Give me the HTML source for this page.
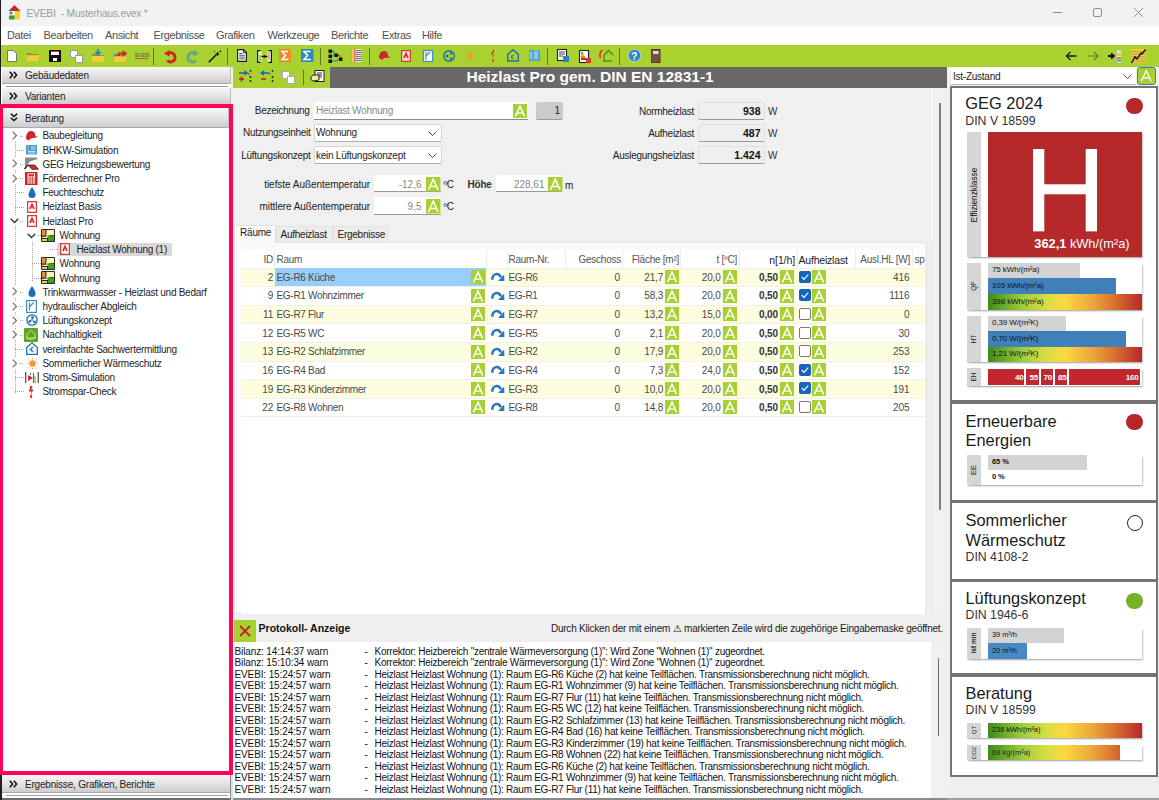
<!DOCTYPE html>
<html><head><meta charset="utf-8"><style>
html,body{margin:0;padding:0;}
body{width:1159px;height:800px;position:relative;overflow:hidden;background:#f0f0f0;font-family:"Liberation Sans",sans-serif;}
.t{position:absolute;white-space:nowrap;line-height:1;}
.b{position:absolute;box-sizing:border-box;}
.ab{position:absolute;background:#a4c93c;color:#fff;text-align:center;font-family:"Liberation Sans",sans-serif;}
svg{position:absolute;overflow:visible;}
</style></head><body>

<div class="b" style="left:0px;top:0px;width:1159px;height:26px;background:#f2f2f2"></div>
<div class="b" style="left:0px;top:26px;width:1159px;height:19px;background:#ffffff"></div>
<svg style="left:8px;top:5px" width="13" height="15" viewBox="0 0 13 15"><polygon points="6.5,0 0.5,6 12.5,6" fill="#c8282d"/><rect x="1" y="6" width="5.5" height="4" fill="#fff"/><circle cx="3" cy="8" r="1.6" fill="#2f82c8"/><rect x="6.5" y="6" width="5.5" height="8.5" fill="#f7d22a"/><rect x="1" y="10.5" width="5.5" height="4" fill="#3f9a2c"/></svg>
<div class="t" style="left:26.5px;top:8.87px;font-size:10.2px;color:#9a9a9a;font-weight:normal;letter-spacing:-0.2px;">EVEBI&nbsp; - Musterhaus.evex *</div>
<div class="b" style="left:1053px;top:12px;width:9px;height:1px;background:#8c8c8c"></div>
<div class="b" style="left:1093px;top:8px;width:9px;height:9px;border:1px solid #8c8c8c;border-radius:2px"></div>
<svg style="left:1134px;top:8px" width="9" height="9" viewBox="0 0 9 9"><path d="M0,0 L9,9 M9,0 L0,9" stroke="#8c8c8c" stroke-width="1"/></svg>
<div class="b" style="left:0px;top:0px;width:1px;height:104px;background:#202020"></div>
<div class="t" style="left:7px;top:29.69px;font-size:11px;color:#505050;font-weight:normal;letter-spacing:-0.4px;">Datei</div>
<div class="t" style="left:43.6px;top:29.69px;font-size:11px;color:#505050;font-weight:normal;letter-spacing:-0.4px;">Bearbeiten</div>
<div class="t" style="left:105px;top:29.69px;font-size:11px;color:#505050;font-weight:normal;letter-spacing:-0.4px;">Ansicht</div>
<div class="t" style="left:153.5px;top:29.69px;font-size:11px;color:#505050;font-weight:normal;letter-spacing:-0.4px;">Ergebnisse</div>
<div class="t" style="left:216px;top:29.69px;font-size:11px;color:#505050;font-weight:normal;letter-spacing:-0.4px;">Grafiken</div>
<div class="t" style="left:267.5px;top:29.69px;font-size:11px;color:#505050;font-weight:normal;letter-spacing:-0.4px;">Werkzeuge</div>
<div class="t" style="left:331px;top:29.69px;font-size:11px;color:#505050;font-weight:normal;letter-spacing:-0.4px;">Berichte</div>
<div class="t" style="left:382px;top:29.69px;font-size:11px;color:#505050;font-weight:normal;letter-spacing:-0.4px;">Extras</div>
<div class="t" style="left:422px;top:29.69px;font-size:11px;color:#505050;font-weight:normal;letter-spacing:-0.4px;">Hilfe</div>
<div class="b" style="left:1px;top:45px;width:1158px;height:22px;background:#a9d12f"></div>
<svg style="left:7px;top:50px" width="10" height="12" viewBox="0 0 10 12"><path d="M0.5,0.5 H6.5 L9.5,3.5 V11.5 H0.5 Z" fill="#fff" stroke="#777" stroke-width="1"/></svg>
<svg style="left:27px;top:51px" width="13" height="10" viewBox="0 0 13 10"><path d="M0,2 H4 L5,3 H11 V4 H0Z" fill="#8a8a6a"/><path d="M0.5,4.5 H12.5 L11,10 H0 Z" fill="#f6cd34"/></svg>
<svg style="left:48.5px;top:50px" width="12" height="12" viewBox="0 0 12 12"><rect x="0" y="0" width="12" height="12" fill="#111"/><rect x="2" y="1" width="8" height="4" fill="#fff"/><rect x="2" y="1" width="8" height="1" fill="#d33"/><rect x="4" y="8" width="4" height="3" fill="#fff"/></svg>
<svg style="left:70px;top:50px" width="13" height="13" viewBox="0 0 13 13"><rect x="0.5" y="0.5" width="7" height="7" fill="#fff" stroke="#999"/><rect x="5.5" y="5.5" width="7" height="7" fill="#fff" stroke="#999"/></svg>
<svg style="left:92px;top:49px" width="13" height="13" viewBox="0 0 13 13"><path d="M0,5 H4 L5,6 H12 V7 H0Z" fill="#8a8a6a"/><path d="M0.5,7 H12.5 L11,13 H0 Z" fill="#f6cd34"/><path d="M6,0 V5 M3.5,3 L6,5.5 L8.5,3" stroke="#2f7fc0" stroke-width="1.8" fill="none"/></svg>
<svg style="left:113.5px;top:49px" width="14" height="13" viewBox="0 0 14 13"><path d="M0,5 H4 L5,6 H11 V7.5 H0Z" fill="#7a7a9a"/><path d="M0.5,7.5 H12.5 L11,13 H0 Z" fill="#f6cd34"/><path d="M5,7 V4.5 H9" stroke="#d02828" stroke-width="2.2" fill="none"/><path d="M8.5,1 L13.5,4.5 L8.5,8 Z" fill="#d02828"/></svg>
<svg style="left:134.5px;top:50px" width="14" height="10" viewBox="0 0 14 10"><text x="0" y="7" font-size="5" fill="#555" font-family="Liberation Sans">EVEBI</text><rect x="0" y="8" width="13" height="1" fill="#d44"/></svg>
<div class="b" style="left:153px;top:48px;width:1px;height:17px;background:#5d7a1a"></div>
<svg style="left:163.5px;top:49.5px" width="13" height="13" viewBox="0 0 13 13"><path d="M4.5,3.2 A4.6,4.6 0 1 1 3.2,10.6" stroke="#d42020" stroke-width="2.9" fill="none"/><path d="M0,3.4 L5.6,0 L5.6,6.6 Z" fill="#d42020"/></svg>
<svg style="left:185.5px;top:49.5px" width="13" height="13" viewBox="0 0 13 13"><path d="M8.5,3.2 A4.6,4.6 0 1 0 9.8,10.6" stroke="#62a68c" stroke-width="2.9" fill="none"/><path d="M13,3.4 L7.4,0 L7.4,6.6 Z" fill="#62a68c"/></svg>
<svg style="left:207.5px;top:49.5px" width="14" height="13" viewBox="0 0 14 13"><path d="M0.8,12.2 L8.2,4.8" stroke="#111" stroke-width="1.5"/><path d="M9.5,1.5 L10.2,3.3 L12,4 L10.2,4.7 L9.5,6.5 L8.8,4.7 L7,4 L8.8,3.3Z" fill="#111"/><path d="M12.2,0 L12.6,1 L13.6,1.4 L12.6,1.8 L12.2,2.8 L11.8,1.8 L10.8,1.4 L11.8,1Z" fill="#111"/><circle cx="6.5" cy="1.5" r="0.6" fill="#111"/></svg>
<div class="b" style="left:227px;top:48px;width:1px;height:17px;background:#5d7a1a"></div>
<svg style="left:237px;top:49.2px" width="10" height="13" viewBox="0 0 10 13"><path d="M0.6,0.6 H6.5 L9.4,3.5 V12.4 H0.6 Z" fill="#fff" stroke="#1a1a1a" stroke-width="1.2"/><path d="M6.3,0.8 V3.7 H9.2" fill="none" stroke="#1a1a1a" stroke-width="0.9"/><path d="M2.2,4.5 H5.5 M2.2,6.3 H7.8 M2.2,8.1 H7.8 M2.2,9.9 H7.8" stroke="#555" stroke-width="1"/></svg>
<svg style="left:256.6px;top:49.5px" width="15" height="13" viewBox="0 0 15 13"><path d="M3.5,0.6 H0.6 V12.4 H3.5" fill="none" stroke="#111" stroke-width="1.2"/><path d="M11.5,0.6 H14.4 V12.4 H11.5" fill="none" stroke="#111" stroke-width="1.2"/><rect x="1.5" y="1.5" width="3" height="10" fill="#fff"/><rect x="10.5" y="1.5" width="3" height="10" fill="#fff"/><rect x="2" y="5" width="2" height="6" fill="#9ccf50"/><path d="M11,3 H13 M11,5 H13 M11,7 H13 M11,9 H13" stroke="#e04040" stroke-width="0.9"/><path d="M4.5,6.5 H10.5" stroke="#111" stroke-width="1.3"/><circle cx="7.5" cy="6.5" r="1.3" fill="#111"/></svg>
<svg style="left:279px;top:49px" width="12" height="13" viewBox="0 0 12 13"><rect x="0" y="0" width="12" height="13" fill="#ee8a2a"/><path d="M9,2.5 H3 L6.5,6.5 L3,10.5 H9.5" stroke="#fff" stroke-width="1.6" fill="none"/></svg>
<svg style="left:300.5px;top:49px" width="12.5" height="13" viewBox="0 0 12.5 13"><rect x="0" y="0" width="12.5" height="13" fill="#2f88c6"/><path d="M9.5,2.5 H3 L6.5,6.5 L3,10.5 H10" stroke="#fff" stroke-width="1.6" fill="none"/></svg>
<div class="b" style="left:319.5px;top:48px;width:1px;height:17px;background:#5d7a1a"></div>
<svg style="left:327.8px;top:49px" width="15" height="14" viewBox="0 0 15 14"><path d="M2.5,2 H6 V6.5 H8 M2.5,7 H6 M2.5,12 H9.5 V10 H12" stroke="#2a7fb8" stroke-width="1" fill="none"/><path d="M8,6.5 H12 V10" stroke="#d33" stroke-width="1" fill="none"/><rect x="0.5" y="0.5" width="3.5" height="3.5" fill="#111"/><rect x="0.5" y="5.5" width="3.5" height="3.5" fill="#111"/><rect x="0.5" y="10.5" width="3.5" height="3.5" fill="#111"/><rect x="6.5" y="4.5" width="3.5" height="3.5" fill="#111"/><rect x="11" y="8.5" width="3.5" height="3.5" fill="#111"/></svg>
<svg style="left:351.3px;top:49px" width="10.5" height="13" viewBox="0 0 10.5 13"><rect x="0" y="0" width="10.5" height="13" fill="#e8e8e8"/><rect x="0" y="0" width="1.6" height="13" fill="#f0a030"/><rect x="1.6" y="0" width="1.6" height="13" fill="#f3d040"/><rect x="3.2" y="0" width="1.3" height="13" fill="#e05050"/><path d="M5,1.5 H10.5 M5,3.5 H10.5 M5,5.5 H10.5 M5,7.5 H10.5 M5,9.5 H10.5 M5,11.5 H10.5" stroke="#666" stroke-width="0.9"/></svg>
<div class="b" style="left:369px;top:48px;width:1px;height:17px;background:#5d7a1a"></div>
<svg style="left:378px;top:49.5px" width="13" height="11" viewBox="0 0 13 11"><path d="M1,8 Q1,1 6,1 Q10,1 10,6 L13,7.5 L6,8 L4,10 Z" fill="#c8282d"/></svg>
<svg style="left:401px;top:49.5px" width="10" height="12" viewBox="0 0 10 12"><rect x="0.6" y="0.6" width="8.8" height="10.8" fill="#f4e0d0" stroke="#d83a2a" stroke-width="1.2"/><path d="M3,7.8 L5,3.6 L7,7.8" stroke="#d82a2a" stroke-width="1.7" fill="none"/></svg>
<svg style="left:423px;top:49.5px" width="10" height="12" viewBox="0 0 10 12"><rect x="0.5" y="0.5" width="9" height="11" fill="#fff" stroke="#3a8ccc" stroke-width="1.2"/><path d="M3,2 V10 M3,6 L7,2" stroke="#3a8ccc" stroke-width="1.2"/></svg>
<svg style="left:443px;top:49.5px" width="12" height="12" viewBox="0 0 12 12"><circle cx="6" cy="6" r="5.3" fill="none" stroke="#1a6fa8" stroke-width="1.4"/><circle cx="4" cy="6" r="1.5" fill="#1a6fa8"/><circle cx="8" cy="3.5" r="1.3" fill="#1a6fa8"/><circle cx="8" cy="8.5" r="1.3" fill="#1a6fa8"/></svg>
<svg style="left:465px;top:50.5px" width="10" height="10" viewBox="0 0 10 10"><circle cx="5" cy="5" r="3" fill="#f29a3a"/><path d="M5,0 V1.3 M5,8.7 V10 M0,5 H1.3 M8.7,5 H10 M1.5,1.5 L2.4,2.4 M7.6,7.6 L8.5,8.5 M1.5,8.5 L2.4,7.6 M7.6,2.4 L8.5,1.5" stroke="#f29a3a" stroke-width="0.9"/></svg>
<svg style="left:489.5px;top:49.5px" width="5" height="12" viewBox="0 0 5 12"><path d="M3,0 L1,5 H3.5 L2,9 L4.5,5 H2.5 L4.5,0Z" fill="#d02828"/><circle cx="3" cy="10.5" r="1" fill="#d02828"/></svg>
<svg style="left:507px;top:49px" width="12" height="13" viewBox="0 0 12 13"><path d="M0.7,5.5 L6,0.8 L11.3,5.5 V12 H0.7Z" fill="none" stroke="#1d73a8" stroke-width="1.4"/><text x="3.5" y="10" font-size="6" fill="#1d73a8" font-family="Liberation Sans" font-weight="bold">€</text></svg>
<svg style="left:529px;top:50px" width="11" height="11" viewBox="0 0 11 11"><rect x="0" y="0" width="11" height="11" fill="#4fa4d8"/><path d="M2,2 V9 M5,2 H9 M5,4 H9 M5,6 H9 M5,8 H9" stroke="#dcefff" stroke-width="0.9"/></svg>
<div class="b" style="left:547px;top:48px;width:1px;height:17px;background:#5d7a1a"></div>
<svg style="left:556.5px;top:49px" width="12" height="13" viewBox="0 0 12 13"><rect x="0.5" y="0.5" width="9" height="11" fill="#fff" stroke="#222" stroke-width="1.1"/><path d="M2,3 H8 M2,5 H8 M2,7 H6" stroke="#444"/><rect x="6" y="7" width="6" height="6" fill="#2f7fc0"/></svg>
<svg style="left:579px;top:49.5px" width="12" height="13" viewBox="0 0 12 13"><rect x="0.5" y="0.5" width="9" height="12" fill="#fff" stroke="#222" stroke-width="1.1"/><rect x="2" y="2" width="2" height="2" fill="#4a4"/><rect x="2" y="4" width="3" height="2" fill="#cc3"/><rect x="2" y="6" width="4" height="2" fill="#e80"/><rect x="2" y="8" width="5" height="2" fill="#d22"/><rect x="7" y="8" width="5" height="5" fill="#d33"/></svg>
<svg style="left:599px;top:49px" width="14" height="14" viewBox="0 0 14 14"><path d="M5,13 V6 L9.5,1.5 L14,6" stroke="#3f8a1f" stroke-width="1.3" fill="none"/><path d="M5,12 H13" stroke="#3f8a1f" stroke-width="1.3"/><path d="M3.5,10 Q1.5,5 5.5,2" stroke="#e0c030" stroke-width="1.5" fill="none"/><path d="M1.5,9 Q-0.5,4 3.5,1" stroke="#d02828" stroke-width="1.4" fill="none"/></svg>
<div class="b" style="left:618.5px;top:48px;width:1px;height:17px;background:#5d7a1a"></div>
<svg style="left:627.5px;top:49px" width="13" height="13" viewBox="0 0 13 13"><circle cx="6.5" cy="6.5" r="6.2" fill="#2f83c6" stroke="#e8f3ff" stroke-width="0.6"/><text x="3.3" y="10.5" font-size="10" font-weight="bold" fill="#fff" font-family="Liberation Sans">?</text></svg>
<svg style="left:650.5px;top:49px" width="10" height="14" viewBox="0 0 10 14"><rect x="0" y="0" width="9.5" height="14" fill="#5a3a2a"/><rect x="1" y="1" width="7.5" height="12" fill="#7a5040"/><rect x="2" y="2" width="5.5" height="3" fill="#bfe0f8"/></svg>
<svg style="left:1065px;top:49.5px" width="12" height="12" viewBox="0 0 12 12"><path d="M11.5,6 H1.5 M5.5,2 L1.5,6 L5.5,10" stroke="#1a1a1a" stroke-width="1.3" fill="none"/></svg>
<svg style="left:1088px;top:49.5px" width="12" height="12" viewBox="0 0 12 12"><path d="M0,6 H10 M6,2 L10,6 L6,10" stroke="#5f7a30" stroke-width="1.1" fill="none"/></svg>
<svg style="left:1108px;top:49.5px" width="14" height="13" viewBox="0 0 14 13"><path d="M0,6 H5 M3,3.5 L6,6 L3,8.5" stroke="#111" stroke-width="1.8" fill="none"/><rect x="8.5" y="0" width="5" height="13" fill="#e4e4e4" stroke="#aaa" stroke-width="0.5"/><rect x="9" y="3" width="4" height="3" fill="#f3d020"/><rect x="9" y="7" width="4" height="2" fill="#b86"/><rect x="9" y="9.5" width="4" height="2" fill="#5a5"/></svg>
<svg style="left:1130.5px;top:49px" width="15" height="14" viewBox="0 0 15 14"><rect x="0" y="0" width="15" height="14" fill="#f0c838"/><path d="M0,2.5 H15 M0,5 H15 M0,7.5 H15 M0,10 H15 M0,12.5 H15" stroke="#b09850" stroke-width="0.8"/><path d="M0.5,14 L4,8 L6,10 L10,4 L11,5 L14.5,0.5" stroke="#111" stroke-width="1.4" fill="none"/></svg>
<div class="b" style="left:1px;top:67px;width:230px;height:40px;background:#fff"></div>
<div class="b" style="left:2px;top:67px;width:229px;height:16.5px;background:linear-gradient(#f6f6f6,#e2e2e2 55%,#cdcdcd);border-bottom:1px solid #a9a9a9;border-right:1px solid #bdbdbd"></div>
<svg style="left:9px;top:71.2px" width="9" height="8" viewBox="0 0 9 8"><path d="M0.8,0.8 L3.6,4 L0.8,7.2 M4.8,0.8 L7.6,4 L4.8,7.2" stroke="#111" stroke-width="1.5" fill="none"/></svg>
<div class="t" style="left:25px;top:71.28px;font-size:10px;color:#222;font-weight:normal;letter-spacing:-0.2px;">Gebäudedaten</div>
<div class="b" style="left:6px;top:86px;width:222px;height:1px;background:#9a9a9a"></div>
<div class="b" style="left:2px;top:88px;width:229px;height:16.5px;background:linear-gradient(#f6f6f6,#e2e2e2 55%,#cdcdcd);border-bottom:1px solid #a9a9a9;border-right:1px solid #bdbdbd"></div>
<svg style="left:9px;top:92.2px" width="9" height="8" viewBox="0 0 9 8"><path d="M0.8,0.8 L3.6,4 L0.8,7.2 M4.8,0.8 L7.6,4 L4.8,7.2" stroke="#111" stroke-width="1.5" fill="none"/></svg>
<div class="t" style="left:25px;top:92.28px;font-size:10px;color:#222;font-weight:normal;letter-spacing:-0.2px;">Varianten</div>
<div class="b" style="left:0px;top:104.4px;width:233px;height:670.6px;background:#fff"></div>
<div class="b" style="left:0px;top:104.4px;width:233px;height:3.6px;background:#fe0459"></div>
<div class="b" style="left:0px;top:104.4px;width:3.4px;height:670.6px;background:#fe0459"></div>
<div class="b" style="left:229.4px;top:104.4px;width:3.6px;height:670.6px;background:#fe0459"></div>
<div class="b" style="left:0px;top:771.1px;width:233px;height:3.9px;background:#fe0459"></div>
<div class="b" style="left:3.4px;top:108px;width:226px;height:19.5px;background:linear-gradient(#f6f6f6,#e2e2e2 55%,#cdcdcd);border-bottom:1px solid #a9a9a9;border-right:1px solid #bdbdbd"></div>
<svg style="left:10px;top:113.2px" width="8" height="9" viewBox="0 0 8 9"><path d="M0.8,0.8 L4,3.6 L7.2,0.8 M0.8,4.8 L4,7.6 L7.2,4.8" stroke="#111" stroke-width="1.5" fill="none"/></svg>
<div class="t" style="left:25px;top:113.78px;font-size:10px;color:#222;font-weight:normal;letter-spacing:-0.2px;">Beratung</div>
<div class="b" style="left:0px;top:104px;width:1px;height:1px;"></div>
<div class="b" style="left:0px;top:775px;width:2px;height:25px;background:#202020"></div>
<div class="b" style="left:2px;top:775px;width:229px;height:25px;background:#fff"></div>
<div class="b" style="left:2px;top:775px;width:229px;height:17.5px;background:linear-gradient(#f6f6f6,#e2e2e2 55%,#cdcdcd);border-bottom:1px solid #a9a9a9;border-right:1px solid #bdbdbd"></div>
<svg style="left:9px;top:779.8px" width="9" height="8" viewBox="0 0 9 8"><path d="M0.8,0.8 L3.6,4 L0.8,7.2 M4.8,0.8 L7.6,4 L4.8,7.2" stroke="#111" stroke-width="1.5" fill="none"/></svg>
<div class="t" style="left:25px;top:779.78px;font-size:10px;color:#222;font-weight:normal;letter-spacing:-0.2px;">Ergebnisse, Grafiken, Berichte</div>
<div class="b" style="left:6px;top:795px;width:222px;height:1px;background:#a0a0a0"></div>
<div class="b" style="left:2px;top:798px;width:229px;height:2px;background:#6d6d6d"></div>
<div class="b" style="left:229.8px;top:775px;width:1px;height:25px;background:#8a8a8a"></div>
<div class="b" style="left:230.8px;top:775px;width:2.2px;height:25px;background:#e0e0e0"></div>
<div class="b" style="left:20.0px;top:136px;width:4.0px;height:1px;background:repeating-linear-gradient(90deg,#aaa 0 1px,transparent 1px 2px)"></div>
<div class="b" style="left:15px;top:150px;width:9px;height:1px;background:repeating-linear-gradient(90deg,#aaa 0 1px,transparent 1px 2px)"></div>
<div class="b" style="left:20.0px;top:164px;width:4.0px;height:1px;background:repeating-linear-gradient(90deg,#aaa 0 1px,transparent 1px 2px)"></div>
<div class="b" style="left:20.0px;top:178px;width:4.0px;height:1px;background:repeating-linear-gradient(90deg,#aaa 0 1px,transparent 1px 2px)"></div>
<div class="b" style="left:15px;top:192px;width:9px;height:1px;background:repeating-linear-gradient(90deg,#aaa 0 1px,transparent 1px 2px)"></div>
<div class="b" style="left:15px;top:207px;width:9px;height:1px;background:repeating-linear-gradient(90deg,#aaa 0 1px,transparent 1px 2px)"></div>
<div class="b" style="left:20.0px;top:221px;width:4.0px;height:1px;background:repeating-linear-gradient(90deg,#aaa 0 1px,transparent 1px 2px)"></div>
<div class="b" style="left:37.5px;top:235px;width:4.0px;height:1px;background:repeating-linear-gradient(90deg,#aaa 0 1px,transparent 1px 2px)"></div>
<div class="b" style="left:50px;top:249px;width:9px;height:1px;background:repeating-linear-gradient(90deg,#aaa 0 1px,transparent 1px 2px)"></div>
<div class="b" style="left:32px;top:263px;width:9px;height:1px;background:repeating-linear-gradient(90deg,#aaa 0 1px,transparent 1px 2px)"></div>
<div class="b" style="left:32px;top:278px;width:9px;height:1px;background:repeating-linear-gradient(90deg,#aaa 0 1px,transparent 1px 2px)"></div>
<div class="b" style="left:20.0px;top:292px;width:4.0px;height:1px;background:repeating-linear-gradient(90deg,#aaa 0 1px,transparent 1px 2px)"></div>
<div class="b" style="left:20.0px;top:306px;width:4.0px;height:1px;background:repeating-linear-gradient(90deg,#aaa 0 1px,transparent 1px 2px)"></div>
<div class="b" style="left:20.0px;top:320px;width:4.0px;height:1px;background:repeating-linear-gradient(90deg,#aaa 0 1px,transparent 1px 2px)"></div>
<div class="b" style="left:20.0px;top:335px;width:4.0px;height:1px;background:repeating-linear-gradient(90deg,#aaa 0 1px,transparent 1px 2px)"></div>
<div class="b" style="left:15px;top:349px;width:9px;height:1px;background:repeating-linear-gradient(90deg,#aaa 0 1px,transparent 1px 2px)"></div>
<div class="b" style="left:20.0px;top:363px;width:4.0px;height:1px;background:repeating-linear-gradient(90deg,#aaa 0 1px,transparent 1px 2px)"></div>
<div class="b" style="left:15px;top:377px;width:9px;height:1px;background:repeating-linear-gradient(90deg,#aaa 0 1px,transparent 1px 2px)"></div>
<div class="b" style="left:15px;top:391px;width:9px;height:1px;background:repeating-linear-gradient(90deg,#aaa 0 1px,transparent 1px 2px)"></div>
<div class="b" style="left:15px;top:142px;width:1px;height:252px;background:repeating-linear-gradient(#aaa 0 1px,transparent 1px 2px)"></div>
<div class="b" style="left:32px;top:242px;width:1px;height:40px;background:repeating-linear-gradient(#aaa 0 1px,transparent 1px 2px)"></div>
<div class="b" style="left:50px;top:249px;width:8px;height:1px;background:repeating-linear-gradient(90deg,#aaa 0 1px,transparent 1px 2px)"></div>
<svg style="left:11.5px;top:131.0px" width="6" height="9" viewBox="0 0 6 9"><rect x="-1" y="-1" width="8" height="11" fill="#fff"/><path d="M0.7,0.7 L4.5,4.5 L0.7,8.3" stroke="#6a6a6a" stroke-width="1.1" fill="none"/></svg>
<svg style="left:25.0px;top:130.0px" width="13" height="11" viewBox="0 0 13 11"><path d="M1,9 Q1,1 6,1 Q10,1 10.5,6 L13,7 L6,8.5 L3.5,10.5 Z" fill="#c8282d"/></svg>
<div class="t" style="left:42.4px;top:131.34px;font-size:10px;color:#1e1e1e;font-weight:normal;letter-spacing:-0.27px;">Baubegleitung</div>
<svg style="left:26.0px;top:145.0px" width="11" height="9.5" viewBox="0 0 11 9.5"><rect x="0" y="0" width="11" height="9.5" rx="0.5" fill="#4a9fd0"/><path d="M2.2,1.5 V5 H3.5 M5,2 H9.5 M5,4 H9.5 M2,6.5 H9.5 M2,8 H9.5" stroke="#e6f3fb" stroke-width="0.8"/></svg>
<div class="t" style="left:42.4px;top:145.56px;font-size:10px;color:#1e1e1e;font-weight:normal;letter-spacing:-0.27px;">BHKW-Simulation</div>
<svg style="left:11.5px;top:159.4px" width="6" height="9" viewBox="0 0 6 9"><rect x="-1" y="-1" width="8" height="11" fill="#fff"/><path d="M0.7,0.7 L4.5,4.5 L0.7,8.3" stroke="#6a6a6a" stroke-width="1.1" fill="none"/></svg>
<svg style="left:24.0px;top:157.2px" width="15" height="13.5" viewBox="0 0 15 13.5"><path d="M1,0.5 H13 L13.6,2 L6,4.6 L3.5,7 L1,9.5 Z" fill="#8c8c8c"/><path d="M4.2,8 H10.8 L14.5,12.3 H7.8 Z" fill="#d22a2a" stroke="#3a0a0a" stroke-width="0.7"/><path d="M0.6,12 L4,7.6" stroke="#111" stroke-width="1.4"/></svg>
<div class="t" style="left:42.4px;top:159.78px;font-size:10px;color:#1e1e1e;font-weight:normal;letter-spacing:-0.27px;">GEG Heizungsbewertung</div>
<svg style="left:11.5px;top:173.7px" width="6" height="9" viewBox="0 0 6 9"><rect x="-1" y="-1" width="8" height="11" fill="#fff"/><path d="M0.7,0.7 L4.5,4.5 L0.7,8.3" stroke="#6a6a6a" stroke-width="1.1" fill="none"/></svg>
<svg style="left:25.0px;top:171.7px" width="12.5" height="13" viewBox="0 0 12.5 13"><rect x="0" y="0" width="12.5" height="13" rx="0.5" fill="#c62828"/><rect x="2.5" y="1.5" width="7.5" height="10" fill="#fff"/><rect x="3.5" y="2.3" width="5.5" height="2" fill="#c62828"/><path d="M2.5,6 H10 M2.5,8 H10 M2.5,10 H10 M5,4.5 V11.5 M7.5,4.5 V11.5" stroke="#c62828" stroke-width="0.7"/></svg>
<div class="t" style="left:42.4px;top:174.00px;font-size:10px;color:#1e1e1e;font-weight:normal;letter-spacing:-0.27px;">Förderrechner Pro</div>
<svg style="left:27.5px;top:186.9px" width="8" height="11" viewBox="0 0 8 11"><path d="M4,0 Q8,6 7.5,8.5 Q7,11 4,11 Q1,11 0.5,8.5 Q0,6 4,0Z" fill="#1a6fb8"/></svg>
<div class="t" style="left:42.4px;top:188.22px;font-size:10px;color:#1e1e1e;font-weight:normal;letter-spacing:-0.27px;">Feuchteschutz</div>
<svg style="left:27.0px;top:200.6px" width="10" height="12" viewBox="0 0 10 12"><rect x="0.6" y="0.6" width="8.8" height="10.8" fill="#f4f4f4" stroke="#d83a3a" stroke-width="1.2"/><path d="M3,7.8 L5,3.6 L7,7.8" stroke="#d82a2a" stroke-width="1.7" fill="none"/></svg>
<div class="t" style="left:42.4px;top:202.44px;font-size:10px;color:#1e1e1e;font-weight:normal;letter-spacing:-0.27px;">Heizlast Basis</div>
<svg style="left:9.5px;top:218.3px" width="9" height="6" viewBox="0 0 9 6"><rect x="-1" y="-2" width="11" height="9" fill="#fff"/><path d="M0.7,0.7 L4.5,4.5 L8.3,0.7" stroke="#333" stroke-width="1.3" fill="none"/></svg>
<svg style="left:27.0px;top:214.8px" width="10" height="12" viewBox="0 0 10 12"><rect x="0.6" y="0.6" width="8.8" height="10.8" fill="#f4f4f4" stroke="#d83a3a" stroke-width="1.2"/><path d="M3,7.8 L5,3.6 L7,7.8" stroke="#d82a2a" stroke-width="1.7" fill="none"/></svg>
<div class="t" style="left:42.4px;top:216.66px;font-size:10px;color:#1e1e1e;font-weight:normal;letter-spacing:-0.27px;">Heizlast Pro</div>
<svg style="left:26.5px;top:232.5px" width="9" height="6" viewBox="0 0 9 6"><rect x="-1" y="-2" width="11" height="9" fill="#fff"/><path d="M0.7,0.7 L4.5,4.5 L8.3,0.7" stroke="#333" stroke-width="1.3" fill="none"/></svg>
<svg style="left:41.3px;top:228.5px" width="14" height="13" viewBox="0 0 14 13"><rect x="0" y="0" width="14" height="13" rx="1" fill="#2a2a2a"/><rect x="1" y="1" width="3.5" height="5.5" fill="#f08a2a"/><rect x="5.5" y="1" width="7.5" height="5" fill="#f8f4b0"/><rect x="7" y="6.5" width="6" height="5.5" fill="#4a9a1a"/><rect x="1" y="10" width="5" height="2" fill="#f0d040"/><path d="M1.2,8.4 H6 V5.8 H8.5" stroke="#f0f0f0" stroke-width="1.3" fill="none"/></svg>
<div class="t" style="left:59.4px;top:230.88px;font-size:10px;color:#1e1e1e;font-weight:normal;letter-spacing:-0.27px;">Wohnung</div>
<div class="b" style="left:57px;top:242.5px;width:115px;height:13.2px;background:#d9d9d9"></div>
<svg style="left:59.6px;top:243.3px" width="10" height="12" viewBox="0 0 10 12"><rect x="0.6" y="0.6" width="8.8" height="10.8" fill="#f4f4f4" stroke="#d83a3a" stroke-width="1.2"/><path d="M3,7.8 L5,3.6 L7,7.8" stroke="#d82a2a" stroke-width="1.7" fill="none"/></svg>
<div class="t" style="left:76.4px;top:245.09px;font-size:10px;color:#1e1e1e;font-weight:normal;letter-spacing:-0.27px;">Heizlast Wohnung (1)</div>
<svg style="left:41.3px;top:257.0px" width="14" height="13" viewBox="0 0 14 13"><rect x="0" y="0" width="14" height="13" rx="1" fill="#2a2a2a"/><rect x="1" y="1" width="3.5" height="5.5" fill="#f08a2a"/><rect x="5.5" y="1" width="7.5" height="5" fill="#f8f4b0"/><rect x="7" y="6.5" width="6" height="5.5" fill="#4a9a1a"/><rect x="1" y="10" width="5" height="2" fill="#f0d040"/><path d="M1.2,8.4 H6 V5.8 H8.5" stroke="#f0f0f0" stroke-width="1.3" fill="none"/></svg>
<div class="t" style="left:59.4px;top:259.32px;font-size:10px;color:#1e1e1e;font-weight:normal;letter-spacing:-0.27px;">Wohnung</div>
<svg style="left:41.3px;top:271.2px" width="14" height="13" viewBox="0 0 14 13"><rect x="0" y="0" width="14" height="13" rx="1" fill="#2a2a2a"/><rect x="1" y="1" width="3.5" height="5.5" fill="#f08a2a"/><rect x="5.5" y="1" width="7.5" height="5" fill="#f8f4b0"/><rect x="7" y="6.5" width="6" height="5.5" fill="#4a9a1a"/><rect x="1" y="10" width="5" height="2" fill="#f0d040"/><path d="M1.2,8.4 H6 V5.8 H8.5" stroke="#f0f0f0" stroke-width="1.3" fill="none"/></svg>
<div class="t" style="left:59.4px;top:273.54px;font-size:10px;color:#1e1e1e;font-weight:normal;letter-spacing:-0.27px;">Wohnung</div>
<svg style="left:11.5px;top:287.4px" width="6" height="9" viewBox="0 0 6 9"><rect x="-1" y="-1" width="8" height="11" fill="#fff"/><path d="M0.7,0.7 L4.5,4.5 L0.7,8.3" stroke="#6a6a6a" stroke-width="1.1" fill="none"/></svg>
<svg style="left:27.5px;top:286.4px" width="8" height="11" viewBox="0 0 8 11"><path d="M4,0 Q8,6 7.5,8.5 Q7,11 4,11 Q1,11 0.5,8.5 Q0,6 4,0Z" fill="#1a6fb8"/></svg>
<div class="t" style="left:42.4px;top:287.76px;font-size:10px;color:#1e1e1e;font-weight:normal;letter-spacing:-0.27px;">Trinkwarmwasser - Heizlast und Bedarf</div>
<svg style="left:11.5px;top:301.6px" width="6" height="9" viewBox="0 0 6 9"><rect x="-1" y="-1" width="8" height="11" fill="#fff"/><path d="M0.7,0.7 L4.5,4.5 L0.7,8.3" stroke="#6a6a6a" stroke-width="1.1" fill="none"/></svg>
<svg style="left:26.0px;top:299.6px" width="11" height="13" viewBox="0 0 11 13"><rect x="0.6" y="0.6" width="9.8" height="11.8" fill="#fff" stroke="#3a8ccc" stroke-width="1.2"/><path d="M3.5,2.5 V10.5 M3.5,7 L7.5,2.5" stroke="#3a8ccc" stroke-width="1.2"/></svg>
<div class="t" style="left:42.4px;top:301.98px;font-size:10px;color:#1e1e1e;font-weight:normal;letter-spacing:-0.27px;">hydraulischer Abgleich</div>
<svg style="left:11.5px;top:315.9px" width="6" height="9" viewBox="0 0 6 9"><rect x="-1" y="-1" width="8" height="11" fill="#fff"/><path d="M0.7,0.7 L4.5,4.5 L0.7,8.3" stroke="#6a6a6a" stroke-width="1.1" fill="none"/></svg>
<svg style="left:26.0px;top:314.4px" width="12" height="12" viewBox="0 0 12 12"><circle cx="6" cy="6" r="5.2" fill="none" stroke="#1a6fa8" stroke-width="1.3"/><circle cx="6.5" cy="3.6" r="1.4" fill="#1a6fa8"/><circle cx="3.8" cy="7.4" r="1.4" fill="#1a6fa8"/><circle cx="8.4" cy="7.8" r="1.4" fill="#1a6fa8"/><circle cx="6" cy="6" r="0.9" fill="#1a6fa8"/></svg>
<div class="t" style="left:42.4px;top:316.20px;font-size:10px;color:#1e1e1e;font-weight:normal;letter-spacing:-0.27px;">Lüftungskonzept</div>
<svg style="left:11.5px;top:330.1px" width="6" height="9" viewBox="0 0 6 9"><rect x="-1" y="-1" width="8" height="11" fill="#fff"/><path d="M0.7,0.7 L4.5,4.5 L0.7,8.3" stroke="#6a6a6a" stroke-width="1.1" fill="none"/></svg>
<svg style="left:24.0px;top:327.6px" width="14" height="14" viewBox="0 0 14 14"><rect x="0" y="0" width="14" height="14" rx="1" fill="#5ea51e"/><path d="M3,6 L7,2.5 L11,6 V10 H3Z" fill="none" stroke="#dff0c0" stroke-width="0.8"/><path d="M2,10 Q7,13 12,9" stroke="#dff0c0" stroke-width="0.8" fill="none"/></svg>
<div class="t" style="left:42.4px;top:330.42px;font-size:10px;color:#1e1e1e;font-weight:normal;letter-spacing:-0.27px;">Nachhaltigkeit</div>
<svg style="left:26.0px;top:342.3px" width="12" height="13" viewBox="0 0 12 13"><path d="M0.7,5.5 L6,0.8 L11.3,5.5 V12.3 H0.7Z" fill="none" stroke="#1d73a8" stroke-width="1.3"/><path d="M7.8,5.2 Q5.2,4.6 5,7.5 Q5.2,10.4 7.8,9.8 M3.6,7 H6.6 M3.6,8.2 H6.6" stroke="#1d73a8" stroke-width="0.9" fill="none"/></svg>
<div class="t" style="left:42.4px;top:344.64px;font-size:10px;color:#1e1e1e;font-weight:normal;letter-spacing:-0.27px;">vereinfachte Sachwertermittlung</div>
<svg style="left:11.5px;top:358.5px" width="6" height="9" viewBox="0 0 6 9"><rect x="-1" y="-1" width="8" height="11" fill="#fff"/><path d="M0.7,0.7 L4.5,4.5 L0.7,8.3" stroke="#6a6a6a" stroke-width="1.1" fill="none"/></svg>
<svg style="left:26.5px;top:357.5px" width="11" height="11" viewBox="0 0 11 11"><circle cx="5.5" cy="5.5" r="3.2" fill="#f29a3a"/><path d="M5.5,0 V1.3 M5.5,9.7 V11 M0,5.5 H1.3 M9.7,5.5 H11 M1.6,1.6 L2.5,2.5 M8.5,8.5 L9.4,9.4 M1.6,9.4 L2.5,8.5 M8.5,2.5 L9.4,1.6" stroke="#f29a3a" stroke-width="0.9"/></svg>
<div class="t" style="left:42.4px;top:358.86px;font-size:10px;color:#1e1e1e;font-weight:normal;letter-spacing:-0.27px;">Sommerlicher Wärmeschutz</div>
<svg style="left:24.5px;top:371.7px" width="14" height="11" viewBox="0 0 14 11"><path d="M0.7,0 V11 M13.3,0 V11" stroke="#555" stroke-width="1.3"/><path d="M3,3 L8,6 L3,9Z" fill="#d02828"/><path d="M5.5,1 V3 M8.5,1 V11" stroke="#333" stroke-width="0.8"/><rect x="9.3" y="4" width="1.5" height="7" fill="#9c4"/></svg>
<div class="t" style="left:42.4px;top:373.08px;font-size:10px;color:#1e1e1e;font-weight:normal;letter-spacing:-0.27px;">Strom-Simulation</div>
<svg style="left:28.0px;top:385.5px" width="6" height="12" viewBox="0 0 6 12"><path d="M2.2,0 L4.6,0 L3.2,3.5 L5.6,3.5 L2.6,8.6 L3.2,5.6 L1,5.6 Z" fill="#d02828"/><path d="M3,8 V10" stroke="#d02828" stroke-width="1"/><circle cx="3" cy="10.8" r="1.2" fill="#d02828"/></svg>
<div class="t" style="left:42.4px;top:387.30px;font-size:10px;color:#1e1e1e;font-weight:normal;letter-spacing:-0.27px;">Stromspar-Check</div>
<div class="b" style="left:233px;top:67px;width:714px;height:20.5px;background:#a9d12f"></div>
<div class="b" style="left:330px;top:67px;width:617px;height:20.5px;background:#686868"></div>
<div class="t" style="left:466.5px;top:69.38px;font-size:15.5px;color:#fff;font-weight:bold;letter-spacing:0px;">Heizlast Pro gem. DIN EN 12831-1</div>
<svg style="left:239px;top:70px" width="13" height="12" viewBox="0 0 13 12"><path d="M0,3 H8 M5.5,1 L8,3 L5.5,5" stroke="#1f5fae" stroke-width="1.6" fill="none"/><path d="M0,9 H5 M2.5,6.5 V11.5" stroke="#d02828" stroke-width="1.8"/><rect x="9" y="3" width="1.5" height="1.5" fill="#d02828"/><circle cx="11.5" cy="0.8" r="0.9" fill="#111"/><circle cx="11.5" cy="7" r="0.9" fill="#111"/><circle cx="11.5" cy="11" r="0.9" fill="#111"/></svg>
<svg style="left:261px;top:70px" width="13" height="12" viewBox="0 0 13 12"><path d="M8,3 H0.5 M3,1 L0.5,3 L3,5" stroke="#1f5fae" stroke-width="1.6" fill="none"/><path d="M0,9 H5" stroke="#d02828" stroke-width="1.8"/><rect x="8" y="3" width="1.5" height="1.5" fill="#d02828"/><circle cx="11.5" cy="0.8" r="0.9" fill="#111"/><circle cx="11.5" cy="7" r="0.9" fill="#111"/><circle cx="11.5" cy="11" r="0.9" fill="#111"/></svg>
<svg style="left:282px;top:71px" width="13" height="13" viewBox="0 0 13 13"><rect x="0.5" y="0.5" width="7" height="7" fill="#fff" stroke="#aaa"/><rect x="5.5" y="5.5" width="7" height="7" fill="#fff" stroke="#aaa"/></svg>
<div class="b" style="left:302.5px;top:70px;width:1px;height:15px;background:#5d7a1a"></div>
<svg style="left:311px;top:70px" width="14" height="12" viewBox="0 0 14 12"><rect x="4" y="0.5" width="9" height="11" fill="#fff" stroke="#222"/><path d="M6,3 H11 M6,5 H11 M6,7 H11" stroke="#333"/><path d="M0,7 Q2,4 5,5 L8,5 V10 L3,11 Q0,11 0,9Z" fill="#f3e6a0" stroke="#111" stroke-width="0.9"/></svg>
<div class="t" style="right:849.5px;top:105.94px;font-size:10px;color:#222;font-weight:normal;letter-spacing:-0.28px;">Bezeichnung</div>
<div class="b" style="left:313.5px;top:102px;width:214.5px;height:17.5px;background:#fff;border-bottom:1px solid #8a8a8a;border-radius:2px 2px 0 0"></div>
<div class="t" style="left:316px;top:105.94px;font-size:10px;color:#8a8a8a;font-weight:normal;letter-spacing:-0.25px;">Heizlast Wohnung</div>
<svg style="left:513px;top:103.5px" width="14" height="14" viewBox="0 0 14 14"><rect width="14" height="14" fill="#a8d030"/><path d="M2.4,12.4 L7,2.1 L11.6,12.4 M4,9.1 H10" stroke="#fff" stroke-width="1.45" fill="none"/></svg>
<div class="b" style="left:535.5px;top:102px;width:27.5px;height:17.5px;background:#cbcbcb;border-bottom:1px solid #9a9a9a;border-radius:2px"></div>
<div class="t" style="right:599px;top:105.94px;font-size:10px;color:#222;font-weight:normal;letter-spacing:0px;">1</div>
<div class="t" style="right:848.5px;top:128.44px;font-size:10px;color:#222;font-weight:normal;letter-spacing:-0.28px;">Nutzungseinheit</div>
<div class="b" style="left:313.5px;top:124px;width:128px;height:17.5px;background:#fff;border:1px solid #d6d6d6;border-bottom-color:#b0b0b0;border-radius:2px"></div>
<div class="t" style="left:316px;top:128.44px;font-size:10px;color:#1e1e1e;font-weight:normal;letter-spacing:-0.25px;">Wohnung</div>
<svg style="left:428px;top:130.5px" width="9" height="5" viewBox="0 0 9 5"><path d="M0.5,0.5 L4.5,4.5 L8.5,0.5" stroke="#444" stroke-width="1" fill="none"/></svg>
<div class="t" style="right:848.5px;top:150.74px;font-size:10px;color:#222;font-weight:normal;letter-spacing:-0.28px;">Lüftungskonzept</div>
<div class="b" style="left:313.5px;top:146.3px;width:128px;height:17.5px;background:#fff;border:1px solid #d6d6d6;border-bottom-color:#b0b0b0;border-radius:2px"></div>
<div class="t" style="left:316px;top:150.74px;font-size:10px;color:#1e1e1e;font-weight:normal;letter-spacing:-0.25px;">kein Lüftungskonzept</div>
<svg style="left:428px;top:152.8px" width="9" height="5" viewBox="0 0 9 5"><path d="M0.5,0.5 L4.5,4.5 L8.5,0.5" stroke="#444" stroke-width="1" fill="none"/></svg>
<div class="t" style="right:465px;top:106.64px;font-size:10px;color:#222;font-weight:normal;letter-spacing:-0.28px;">Normheizlast</div>
<div class="b" style="left:698px;top:102px;width:67px;height:17.5px;background:#efefef;border:1px solid #dedede;border-bottom:1.5px solid #9a9a9a;border-radius:2px"></div>
<div class="t" style="right:398.5px;top:105.71px;font-size:10.5px;color:#111;font-weight:bold;letter-spacing:0px;">938</div>
<div class="t" style="left:768px;top:106.94px;font-size:10px;color:#333;font-weight:normal;letter-spacing:0px;">W</div>
<div class="t" style="right:465px;top:128.94px;font-size:10px;color:#222;font-weight:normal;letter-spacing:-0.28px;">Aufheizlast</div>
<div class="b" style="left:698px;top:124.3px;width:67px;height:17.5px;background:#efefef;border:1px solid #dedede;border-bottom:1.5px solid #9a9a9a;border-radius:2px"></div>
<div class="t" style="right:398.5px;top:128.01px;font-size:10.5px;color:#111;font-weight:bold;letter-spacing:0px;">487</div>
<div class="t" style="left:768px;top:129.24px;font-size:10px;color:#333;font-weight:normal;letter-spacing:0px;">W</div>
<div class="t" style="right:465px;top:150.94px;font-size:10px;color:#222;font-weight:normal;letter-spacing:-0.28px;">Auslegungsheizlast</div>
<div class="b" style="left:698px;top:146.3px;width:67px;height:17.5px;background:#efefef;border:1px solid #dedede;border-bottom:1.5px solid #9a9a9a;border-radius:2px"></div>
<div class="t" style="right:398.5px;top:150.01px;font-size:10.5px;color:#111;font-weight:bold;letter-spacing:0px;">1.424</div>
<div class="t" style="left:768px;top:151.24px;font-size:10px;color:#333;font-weight:normal;letter-spacing:0px;">W</div>
<div class="t" style="right:789px;top:179.94px;font-size:10px;color:#222;font-weight:normal;letter-spacing:-0.04px;">tiefste Außentemperatur</div>
<div class="b" style="left:374px;top:175.2px;width:66.5px;height:17.3px;background:#fff;border-bottom:1px solid #9a9a9a;border-radius:2px 2px 0 0"></div>
<div class="t" style="right:737.5px;top:179.94px;font-size:10px;color:#888;font-weight:normal;letter-spacing:0px;">-12,6</div>
<svg style="left:425.5px;top:176.5px" width="14.5" height="14.5" viewBox="0 0 14 14"><rect width="14" height="14" fill="#a8d030"/><path d="M2.4,12.4 L7,2.1 L11.6,12.4 M4,9.1 H10" stroke="#fff" stroke-width="1.45" fill="none"/></svg>
<div class="t" style="left:443.5px;top:180.44px;font-size:10px;color:#222;font-weight:normal;letter-spacing:-0.3px;">ºC</div>
<div class="t" style="left:467.5px;top:179.94px;font-size:10px;color:#333;font-weight:bold;letter-spacing:-0.2px;">Höhe</div>
<div class="b" style="left:496px;top:175.2px;width:66px;height:17.3px;background:#fff;border-bottom:1px solid #9a9a9a;border-radius:2px 2px 0 0"></div>
<div class="t" style="right:614.5px;top:179.94px;font-size:10px;color:#888;font-weight:normal;letter-spacing:0px;">228,61</div>
<svg style="left:548px;top:176.5px" width="14.5" height="14.5" viewBox="0 0 14 14"><rect width="14" height="14" fill="#a8d030"/><path d="M2.4,12.4 L7,2.1 L11.6,12.4 M4,9.1 H10" stroke="#fff" stroke-width="1.45" fill="none"/></svg>
<div class="t" style="left:565px;top:180.94px;font-size:10px;color:#222;font-weight:normal;letter-spacing:0px;">m</div>
<div class="t" style="right:789px;top:201.94px;font-size:10px;color:#222;font-weight:normal;letter-spacing:-0.1px;">mittlere Außentemperatur</div>
<div class="b" style="left:374px;top:197.3px;width:66.5px;height:17.3px;background:#fff;border-bottom:1px solid #9a9a9a;border-radius:2px 2px 0 0"></div>
<div class="t" style="right:737.5px;top:201.94px;font-size:10px;color:#888;font-weight:normal;letter-spacing:0px;">9,5</div>
<svg style="left:425.5px;top:198.5px" width="14.5" height="14.5" viewBox="0 0 14 14"><rect width="14" height="14" fill="#a8d030"/><path d="M2.4,12.4 L7,2.1 L11.6,12.4 M4,9.1 H10" stroke="#fff" stroke-width="1.45" fill="none"/></svg>
<div class="t" style="left:443.5px;top:202.44px;font-size:10px;color:#222;font-weight:normal;letter-spacing:-0.3px;">ºC</div>
<div class="b" style="left:234px;top:241.5px;width:697px;height:372.5px;background:#fafafa;border:1px solid #e6e6e6"></div>
<div class="b" style="left:276px;top:226px;width:56.5px;height:16px;background:#ececec;border:1px solid #e2e2e2;border-bottom:none"></div>
<div class="b" style="left:333px;top:226px;width:54.5px;height:16px;background:#ececec;border:1px solid #e2e2e2;border-bottom:none"></div>
<div class="b" style="left:234px;top:224.5px;width:42px;height:18px;background:#fafafa;border:1px solid #e2e2e2;border-bottom:none"></div>
<div class="t" style="left:240px;top:228.03px;font-size:10px;color:#222;font-weight:normal;letter-spacing:-0.2px;">Räume</div>
<div class="t" style="left:280.5px;top:230.03px;font-size:10px;color:#222;font-weight:normal;letter-spacing:-0.25px;">Aufheizlast</div>
<div class="t" style="left:337.5px;top:230.03px;font-size:10px;color:#222;font-weight:normal;letter-spacing:-0.25px;">Ergebnisse</div>
<div class="b" style="left:241px;top:249.5px;width:684px;height:364.5px;background:#fff"></div>
<div class="t" style="right:886px;top:255.03px;font-size:10px;color:#555;font-weight:normal;letter-spacing:-0.25px;">ID</div>
<div class="t" style="left:276.5px;top:255.03px;font-size:10px;color:#555;font-weight:normal;letter-spacing:-0.25px;">Raum</div>
<div class="t" style="left:508.5px;top:255.03px;font-size:10px;color:#555;font-weight:normal;letter-spacing:-0.25px;">Raum-Nr.</div>
<div class="t" style="right:538px;top:255.03px;font-size:10px;color:#555;font-weight:normal;letter-spacing:-0.25px;">Geschoss</div>
<div class="t" style="right:480px;top:255.03px;font-size:10px;color:#555;font-weight:normal;letter-spacing:-0.25px;">Fläche [m²]</div>
<div class="t" style="right:422px;top:255.03px;font-size:10px;color:#555;font-weight:normal;letter-spacing:-0.25px;">t [ºC]</div>
<div class="t" style="right:364px;top:254.61px;font-size:10.5px;color:#222;font-weight:normal;letter-spacing:-0.1px;">n[1/h]</div>
<div class="t" style="left:798.5px;top:254.61px;font-size:10.5px;color:#222;font-weight:normal;letter-spacing:-0.2px;">Aufheizlast</div>
<div class="t" style="right:249px;top:255.03px;font-size:10px;color:#555;font-weight:normal;letter-spacing:-0.25px;">Ausl.HL [W]</div>
<div class="t" style="left:914.5px;top:255.03px;font-size:10px;color:#555;font-weight:normal;letter-spacing:-0.25px;">sp</div>
<div class="b" style="left:274px;top:249.5px;width:1px;height:166.9px;background:#ececec"></div>
<div class="b" style="left:486px;top:249.5px;width:1px;height:166.9px;background:#ececec"></div>
<div class="b" style="left:507px;top:249.5px;width:1px;height:166.9px;background:#ececec"></div>
<div class="b" style="left:565px;top:249.5px;width:1px;height:166.9px;background:#ececec"></div>
<div class="b" style="left:622px;top:249.5px;width:1px;height:166.9px;background:#ececec"></div>
<div class="b" style="left:680px;top:249.5px;width:1px;height:166.9px;background:#ececec"></div>
<div class="b" style="left:738.5px;top:249.5px;width:1px;height:166.9px;background:#ececec"></div>
<div class="b" style="left:796.5px;top:249.5px;width:1px;height:166.9px;background:#ececec"></div>
<div class="b" style="left:854.5px;top:249.5px;width:1px;height:166.9px;background:#ececec"></div>
<div class="b" style="left:912px;top:249.5px;width:1px;height:166.9px;background:#ececec"></div>
<div class="b" style="left:241px;top:267.5px;width:684px;height:18.61px;background:#fdfddf;border-top:1px solid #efefef"></div>
<div class="b" style="left:274.5px;top:267.5px;width:211.5px;height:18.61px;background:#99cdfc"></div>
<div class="t" style="right:886px;top:272.84px;font-size:10px;color:#4a4a4a;font-weight:normal;letter-spacing:-0.2px;">2</div>
<div class="t" style="left:276.5px;top:272.84px;font-size:10px;color:#4a4a4a;font-weight:normal;letter-spacing:-0.3px;">EG-R6 Küche</div>
<svg style="left:470.5px;top:270.2px" width="14" height="14" viewBox="0 0 14 14"><rect width="14" height="14" fill="#a8d030"/><path d="M2.4,12.4 L7,2.1 L11.6,12.4 M4,9.1 H10" stroke="#fff" stroke-width="1.45" fill="none"/></svg>
<svg style="left:491px;top:270.10px" width="14" height="14" viewBox="0 0 14 14"><rect width="14" height="14" fill="#fff"/><path d="M1.3,9.8 C1.3,3.5 7.5,1.8 10,7.2" stroke="#2a78b8" stroke-width="2.5" fill="none"/><path d="M13.2,4.4 L13.4,10.9 L7,10.9Z" fill="#2a78b8"/></svg>
<div class="t" style="left:508.5px;top:272.84px;font-size:10px;color:#4a4a4a;font-weight:normal;letter-spacing:-0.3px;">EG-R6</div>
<div class="t" style="right:539px;top:272.84px;font-size:10px;color:#4a4a4a;font-weight:normal;letter-spacing:0px;">0</div>
<div class="t" style="right:496px;top:272.84px;font-size:10px;color:#4a4a4a;font-weight:normal;letter-spacing:-0.2px;">21,7</div>
<svg style="left:664.5px;top:270.2px" width="14" height="14" viewBox="0 0 14 14"><rect width="14" height="14" fill="#a8d030"/><path d="M2.4,12.4 L7,2.1 L11.6,12.4 M4,9.1 H10" stroke="#fff" stroke-width="1.45" fill="none"/></svg>
<div class="t" style="right:438.5px;top:272.84px;font-size:10px;color:#4a4a4a;font-weight:normal;letter-spacing:-0.2px;">20,0</div>
<svg style="left:722.5px;top:270.2px" width="14" height="14" viewBox="0 0 14 14"><rect width="14" height="14" fill="#a8d030"/><path d="M2.4,12.4 L7,2.1 L11.6,12.4 M4,9.1 H10" stroke="#fff" stroke-width="1.45" fill="none"/></svg>
<div class="t" style="right:381px;top:272.84px;font-size:10px;color:#333;font-weight:bold;letter-spacing:-0.1px;">0,50</div>
<svg style="left:780px;top:270.2px" width="14" height="14" viewBox="0 0 14 14"><rect width="14" height="14" fill="#a8d030"/><path d="M2.4,12.4 L7,2.1 L11.6,12.4 M4,9.1 H10" stroke="#fff" stroke-width="1.45" fill="none"/></svg>
<svg style="left:798.5px;top:270.70px" width="12" height="12" viewBox="0 0 12 12"><rect x="0" y="0" width="12" height="12" rx="2" fill="#1565c0"/><path d="M2.8,6 L5,8.3 L9.2,3.6" stroke="#fff" stroke-width="1.2" fill="none"/></svg>
<svg style="left:811.5px;top:270.2px" width="14" height="14" viewBox="0 0 14 14"><rect width="14" height="14" fill="#a8d030"/><path d="M2.4,12.4 L7,2.1 L11.6,12.4 M4,9.1 H10" stroke="#fff" stroke-width="1.45" fill="none"/></svg>
<div class="t" style="right:249.5px;top:272.84px;font-size:10px;color:#4a4a4a;font-weight:normal;letter-spacing:-0.1px;">416</div>
<div class="b" style="left:241px;top:286.11px;width:684px;height:18.61px;background:#ffffff;border-top:1px solid #efefef"></div>
<div class="t" style="right:886px;top:291.45px;font-size:10px;color:#4a4a4a;font-weight:normal;letter-spacing:-0.2px;">9</div>
<div class="t" style="left:276.5px;top:291.45px;font-size:10px;color:#4a4a4a;font-weight:normal;letter-spacing:-0.3px;">EG-R1 Wohnzimmer</div>
<svg style="left:470.5px;top:288.81px" width="14" height="14" viewBox="0 0 14 14"><rect width="14" height="14" fill="#a8d030"/><path d="M2.4,12.4 L7,2.1 L11.6,12.4 M4,9.1 H10" stroke="#fff" stroke-width="1.45" fill="none"/></svg>
<svg style="left:491px;top:288.71px" width="14" height="14" viewBox="0 0 14 14"><rect width="14" height="14" fill="#fff"/><path d="M1.3,9.8 C1.3,3.5 7.5,1.8 10,7.2" stroke="#2a78b8" stroke-width="2.5" fill="none"/><path d="M13.2,4.4 L13.4,10.9 L7,10.9Z" fill="#2a78b8"/></svg>
<div class="t" style="left:508.5px;top:291.45px;font-size:10px;color:#4a4a4a;font-weight:normal;letter-spacing:-0.3px;">EG-R1</div>
<div class="t" style="right:539px;top:291.45px;font-size:10px;color:#4a4a4a;font-weight:normal;letter-spacing:0px;">0</div>
<div class="t" style="right:496px;top:291.45px;font-size:10px;color:#4a4a4a;font-weight:normal;letter-spacing:-0.2px;">58,3</div>
<svg style="left:664.5px;top:288.81px" width="14" height="14" viewBox="0 0 14 14"><rect width="14" height="14" fill="#a8d030"/><path d="M2.4,12.4 L7,2.1 L11.6,12.4 M4,9.1 H10" stroke="#fff" stroke-width="1.45" fill="none"/></svg>
<div class="t" style="right:438.5px;top:291.45px;font-size:10px;color:#4a4a4a;font-weight:normal;letter-spacing:-0.2px;">20,0</div>
<svg style="left:722.5px;top:288.81px" width="14" height="14" viewBox="0 0 14 14"><rect width="14" height="14" fill="#a8d030"/><path d="M2.4,12.4 L7,2.1 L11.6,12.4 M4,9.1 H10" stroke="#fff" stroke-width="1.45" fill="none"/></svg>
<div class="t" style="right:381px;top:291.45px;font-size:10px;color:#333;font-weight:bold;letter-spacing:-0.1px;">0,50</div>
<svg style="left:780px;top:288.81px" width="14" height="14" viewBox="0 0 14 14"><rect width="14" height="14" fill="#a8d030"/><path d="M2.4,12.4 L7,2.1 L11.6,12.4 M4,9.1 H10" stroke="#fff" stroke-width="1.45" fill="none"/></svg>
<svg style="left:798.5px;top:289.31px" width="12" height="12" viewBox="0 0 12 12"><rect x="0" y="0" width="12" height="12" rx="2" fill="#1565c0"/><path d="M2.8,6 L5,8.3 L9.2,3.6" stroke="#fff" stroke-width="1.2" fill="none"/></svg>
<svg style="left:811.5px;top:288.81px" width="14" height="14" viewBox="0 0 14 14"><rect width="14" height="14" fill="#a8d030"/><path d="M2.4,12.4 L7,2.1 L11.6,12.4 M4,9.1 H10" stroke="#fff" stroke-width="1.45" fill="none"/></svg>
<div class="t" style="right:249.5px;top:291.45px;font-size:10px;color:#4a4a4a;font-weight:normal;letter-spacing:-0.1px;">1116</div>
<div class="b" style="left:241px;top:304.72px;width:684px;height:18.61px;background:#fdfddf;border-top:1px solid #efefef"></div>
<div class="t" style="right:886px;top:310.06px;font-size:10px;color:#4a4a4a;font-weight:normal;letter-spacing:-0.2px;">11</div>
<div class="t" style="left:276.5px;top:310.06px;font-size:10px;color:#4a4a4a;font-weight:normal;letter-spacing:-0.3px;">EG-R7 Flur</div>
<svg style="left:470.5px;top:307.42px" width="14" height="14" viewBox="0 0 14 14"><rect width="14" height="14" fill="#a8d030"/><path d="M2.4,12.4 L7,2.1 L11.6,12.4 M4,9.1 H10" stroke="#fff" stroke-width="1.45" fill="none"/></svg>
<svg style="left:491px;top:307.32px" width="14" height="14" viewBox="0 0 14 14"><rect width="14" height="14" fill="#fff"/><path d="M1.3,9.8 C1.3,3.5 7.5,1.8 10,7.2" stroke="#2a78b8" stroke-width="2.5" fill="none"/><path d="M13.2,4.4 L13.4,10.9 L7,10.9Z" fill="#2a78b8"/></svg>
<div class="t" style="left:508.5px;top:310.06px;font-size:10px;color:#4a4a4a;font-weight:normal;letter-spacing:-0.3px;">EG-R7</div>
<div class="t" style="right:539px;top:310.06px;font-size:10px;color:#4a4a4a;font-weight:normal;letter-spacing:0px;">0</div>
<div class="t" style="right:496px;top:310.06px;font-size:10px;color:#4a4a4a;font-weight:normal;letter-spacing:-0.2px;">13,2</div>
<svg style="left:664.5px;top:307.42px" width="14" height="14" viewBox="0 0 14 14"><rect width="14" height="14" fill="#a8d030"/><path d="M2.4,12.4 L7,2.1 L11.6,12.4 M4,9.1 H10" stroke="#fff" stroke-width="1.45" fill="none"/></svg>
<div class="t" style="right:438.5px;top:310.06px;font-size:10px;color:#4a4a4a;font-weight:normal;letter-spacing:-0.2px;">15,0</div>
<svg style="left:722.5px;top:307.42px" width="14" height="14" viewBox="0 0 14 14"><rect width="14" height="14" fill="#a8d030"/><path d="M2.4,12.4 L7,2.1 L11.6,12.4 M4,9.1 H10" stroke="#fff" stroke-width="1.45" fill="none"/></svg>
<div class="t" style="right:381px;top:310.06px;font-size:10px;color:#333;font-weight:bold;letter-spacing:-0.1px;">0,00</div>
<svg style="left:780px;top:307.42px" width="14" height="14" viewBox="0 0 14 14"><rect width="14" height="14" fill="#a8d030"/><path d="M2.4,12.4 L7,2.1 L11.6,12.4 M4,9.1 H10" stroke="#fff" stroke-width="1.45" fill="none"/></svg>
<div class="b" style="left:798.5px;top:307.92px;width:12px;height:12px;border:1px solid #777;border-radius:2px;background:#fff"></div>
<svg style="left:811.5px;top:307.42px" width="14" height="14" viewBox="0 0 14 14"><rect width="14" height="14" fill="#a8d030"/><path d="M2.4,12.4 L7,2.1 L11.6,12.4 M4,9.1 H10" stroke="#fff" stroke-width="1.45" fill="none"/></svg>
<div class="t" style="right:249.5px;top:310.06px;font-size:10px;color:#4a4a4a;font-weight:normal;letter-spacing:-0.1px;">0</div>
<div class="b" style="left:241px;top:323.33px;width:684px;height:18.61px;background:#ffffff;border-top:1px solid #efefef"></div>
<div class="t" style="right:886px;top:328.67px;font-size:10px;color:#4a4a4a;font-weight:normal;letter-spacing:-0.2px;">12</div>
<div class="t" style="left:276.5px;top:328.67px;font-size:10px;color:#4a4a4a;font-weight:normal;letter-spacing:-0.3px;">EG-R5 WC</div>
<svg style="left:470.5px;top:326.03px" width="14" height="14" viewBox="0 0 14 14"><rect width="14" height="14" fill="#a8d030"/><path d="M2.4,12.4 L7,2.1 L11.6,12.4 M4,9.1 H10" stroke="#fff" stroke-width="1.45" fill="none"/></svg>
<svg style="left:491px;top:325.93px" width="14" height="14" viewBox="0 0 14 14"><rect width="14" height="14" fill="#fff"/><path d="M1.3,9.8 C1.3,3.5 7.5,1.8 10,7.2" stroke="#2a78b8" stroke-width="2.5" fill="none"/><path d="M13.2,4.4 L13.4,10.9 L7,10.9Z" fill="#2a78b8"/></svg>
<div class="t" style="left:508.5px;top:328.67px;font-size:10px;color:#4a4a4a;font-weight:normal;letter-spacing:-0.3px;">EG-R5</div>
<div class="t" style="right:539px;top:328.67px;font-size:10px;color:#4a4a4a;font-weight:normal;letter-spacing:0px;">0</div>
<div class="t" style="right:496px;top:328.67px;font-size:10px;color:#4a4a4a;font-weight:normal;letter-spacing:-0.2px;">2,1</div>
<svg style="left:664.5px;top:326.03px" width="14" height="14" viewBox="0 0 14 14"><rect width="14" height="14" fill="#a8d030"/><path d="M2.4,12.4 L7,2.1 L11.6,12.4 M4,9.1 H10" stroke="#fff" stroke-width="1.45" fill="none"/></svg>
<div class="t" style="right:438.5px;top:328.67px;font-size:10px;color:#4a4a4a;font-weight:normal;letter-spacing:-0.2px;">20,0</div>
<svg style="left:722.5px;top:326.03px" width="14" height="14" viewBox="0 0 14 14"><rect width="14" height="14" fill="#a8d030"/><path d="M2.4,12.4 L7,2.1 L11.6,12.4 M4,9.1 H10" stroke="#fff" stroke-width="1.45" fill="none"/></svg>
<div class="t" style="right:381px;top:328.67px;font-size:10px;color:#333;font-weight:bold;letter-spacing:-0.1px;">0,50</div>
<svg style="left:780px;top:326.03px" width="14" height="14" viewBox="0 0 14 14"><rect width="14" height="14" fill="#a8d030"/><path d="M2.4,12.4 L7,2.1 L11.6,12.4 M4,9.1 H10" stroke="#fff" stroke-width="1.45" fill="none"/></svg>
<div class="b" style="left:798.5px;top:326.53px;width:12px;height:12px;border:1px solid #777;border-radius:2px;background:#fff"></div>
<svg style="left:811.5px;top:326.03px" width="14" height="14" viewBox="0 0 14 14"><rect width="14" height="14" fill="#a8d030"/><path d="M2.4,12.4 L7,2.1 L11.6,12.4 M4,9.1 H10" stroke="#fff" stroke-width="1.45" fill="none"/></svg>
<div class="t" style="right:249.5px;top:328.67px;font-size:10px;color:#4a4a4a;font-weight:normal;letter-spacing:-0.1px;">30</div>
<div class="b" style="left:241px;top:341.94px;width:684px;height:18.61px;background:#fdfddf;border-top:1px solid #efefef"></div>
<div class="t" style="right:886px;top:347.28px;font-size:10px;color:#4a4a4a;font-weight:normal;letter-spacing:-0.2px;">13</div>
<div class="t" style="left:276.5px;top:347.28px;font-size:10px;color:#4a4a4a;font-weight:normal;letter-spacing:-0.3px;">EG-R2 Schlafzimmer</div>
<svg style="left:470.5px;top:344.64px" width="14" height="14" viewBox="0 0 14 14"><rect width="14" height="14" fill="#a8d030"/><path d="M2.4,12.4 L7,2.1 L11.6,12.4 M4,9.1 H10" stroke="#fff" stroke-width="1.45" fill="none"/></svg>
<svg style="left:491px;top:344.54px" width="14" height="14" viewBox="0 0 14 14"><rect width="14" height="14" fill="#fff"/><path d="M1.3,9.8 C1.3,3.5 7.5,1.8 10,7.2" stroke="#2a78b8" stroke-width="2.5" fill="none"/><path d="M13.2,4.4 L13.4,10.9 L7,10.9Z" fill="#2a78b8"/></svg>
<div class="t" style="left:508.5px;top:347.28px;font-size:10px;color:#4a4a4a;font-weight:normal;letter-spacing:-0.3px;">EG-R2</div>
<div class="t" style="right:539px;top:347.28px;font-size:10px;color:#4a4a4a;font-weight:normal;letter-spacing:0px;">0</div>
<div class="t" style="right:496px;top:347.28px;font-size:10px;color:#4a4a4a;font-weight:normal;letter-spacing:-0.2px;">17,9</div>
<svg style="left:664.5px;top:344.64px" width="14" height="14" viewBox="0 0 14 14"><rect width="14" height="14" fill="#a8d030"/><path d="M2.4,12.4 L7,2.1 L11.6,12.4 M4,9.1 H10" stroke="#fff" stroke-width="1.45" fill="none"/></svg>
<div class="t" style="right:438.5px;top:347.28px;font-size:10px;color:#4a4a4a;font-weight:normal;letter-spacing:-0.2px;">20,0</div>
<svg style="left:722.5px;top:344.64px" width="14" height="14" viewBox="0 0 14 14"><rect width="14" height="14" fill="#a8d030"/><path d="M2.4,12.4 L7,2.1 L11.6,12.4 M4,9.1 H10" stroke="#fff" stroke-width="1.45" fill="none"/></svg>
<div class="t" style="right:381px;top:347.28px;font-size:10px;color:#333;font-weight:bold;letter-spacing:-0.1px;">0,50</div>
<svg style="left:780px;top:344.64px" width="14" height="14" viewBox="0 0 14 14"><rect width="14" height="14" fill="#a8d030"/><path d="M2.4,12.4 L7,2.1 L11.6,12.4 M4,9.1 H10" stroke="#fff" stroke-width="1.45" fill="none"/></svg>
<div class="b" style="left:798.5px;top:345.14px;width:12px;height:12px;border:1px solid #777;border-radius:2px;background:#fff"></div>
<svg style="left:811.5px;top:344.64px" width="14" height="14" viewBox="0 0 14 14"><rect width="14" height="14" fill="#a8d030"/><path d="M2.4,12.4 L7,2.1 L11.6,12.4 M4,9.1 H10" stroke="#fff" stroke-width="1.45" fill="none"/></svg>
<div class="t" style="right:249.5px;top:347.28px;font-size:10px;color:#4a4a4a;font-weight:normal;letter-spacing:-0.1px;">253</div>
<div class="b" style="left:241px;top:360.55px;width:684px;height:18.61px;background:#ffffff;border-top:1px solid #efefef"></div>
<div class="t" style="right:886px;top:365.89px;font-size:10px;color:#4a4a4a;font-weight:normal;letter-spacing:-0.2px;">16</div>
<div class="t" style="left:276.5px;top:365.89px;font-size:10px;color:#4a4a4a;font-weight:normal;letter-spacing:-0.3px;">EG-R4 Bad</div>
<svg style="left:470.5px;top:363.25px" width="14" height="14" viewBox="0 0 14 14"><rect width="14" height="14" fill="#a8d030"/><path d="M2.4,12.4 L7,2.1 L11.6,12.4 M4,9.1 H10" stroke="#fff" stroke-width="1.45" fill="none"/></svg>
<svg style="left:491px;top:363.15px" width="14" height="14" viewBox="0 0 14 14"><rect width="14" height="14" fill="#fff"/><path d="M1.3,9.8 C1.3,3.5 7.5,1.8 10,7.2" stroke="#2a78b8" stroke-width="2.5" fill="none"/><path d="M13.2,4.4 L13.4,10.9 L7,10.9Z" fill="#2a78b8"/></svg>
<div class="t" style="left:508.5px;top:365.89px;font-size:10px;color:#4a4a4a;font-weight:normal;letter-spacing:-0.3px;">EG-R4</div>
<div class="t" style="right:539px;top:365.89px;font-size:10px;color:#4a4a4a;font-weight:normal;letter-spacing:0px;">0</div>
<div class="t" style="right:496px;top:365.89px;font-size:10px;color:#4a4a4a;font-weight:normal;letter-spacing:-0.2px;">7,3</div>
<svg style="left:664.5px;top:363.25px" width="14" height="14" viewBox="0 0 14 14"><rect width="14" height="14" fill="#a8d030"/><path d="M2.4,12.4 L7,2.1 L11.6,12.4 M4,9.1 H10" stroke="#fff" stroke-width="1.45" fill="none"/></svg>
<div class="t" style="right:438.5px;top:365.89px;font-size:10px;color:#4a4a4a;font-weight:normal;letter-spacing:-0.2px;">24,0</div>
<svg style="left:722.5px;top:363.25px" width="14" height="14" viewBox="0 0 14 14"><rect width="14" height="14" fill="#a8d030"/><path d="M2.4,12.4 L7,2.1 L11.6,12.4 M4,9.1 H10" stroke="#fff" stroke-width="1.45" fill="none"/></svg>
<div class="t" style="right:381px;top:365.89px;font-size:10px;color:#333;font-weight:bold;letter-spacing:-0.1px;">0,50</div>
<svg style="left:780px;top:363.25px" width="14" height="14" viewBox="0 0 14 14"><rect width="14" height="14" fill="#a8d030"/><path d="M2.4,12.4 L7,2.1 L11.6,12.4 M4,9.1 H10" stroke="#fff" stroke-width="1.45" fill="none"/></svg>
<svg style="left:798.5px;top:363.75px" width="12" height="12" viewBox="0 0 12 12"><rect x="0" y="0" width="12" height="12" rx="2" fill="#1565c0"/><path d="M2.8,6 L5,8.3 L9.2,3.6" stroke="#fff" stroke-width="1.2" fill="none"/></svg>
<svg style="left:811.5px;top:363.25px" width="14" height="14" viewBox="0 0 14 14"><rect width="14" height="14" fill="#a8d030"/><path d="M2.4,12.4 L7,2.1 L11.6,12.4 M4,9.1 H10" stroke="#fff" stroke-width="1.45" fill="none"/></svg>
<div class="t" style="right:249.5px;top:365.89px;font-size:10px;color:#4a4a4a;font-weight:normal;letter-spacing:-0.1px;">152</div>
<div class="b" style="left:241px;top:379.16px;width:684px;height:18.61px;background:#fdfddf;border-top:1px solid #efefef"></div>
<div class="t" style="right:886px;top:384.50px;font-size:10px;color:#4a4a4a;font-weight:normal;letter-spacing:-0.2px;">19</div>
<div class="t" style="left:276.5px;top:384.50px;font-size:10px;color:#4a4a4a;font-weight:normal;letter-spacing:-0.3px;">EG-R3 Kinderzimmer</div>
<svg style="left:470.5px;top:381.86px" width="14" height="14" viewBox="0 0 14 14"><rect width="14" height="14" fill="#a8d030"/><path d="M2.4,12.4 L7,2.1 L11.6,12.4 M4,9.1 H10" stroke="#fff" stroke-width="1.45" fill="none"/></svg>
<svg style="left:491px;top:381.76px" width="14" height="14" viewBox="0 0 14 14"><rect width="14" height="14" fill="#fff"/><path d="M1.3,9.8 C1.3,3.5 7.5,1.8 10,7.2" stroke="#2a78b8" stroke-width="2.5" fill="none"/><path d="M13.2,4.4 L13.4,10.9 L7,10.9Z" fill="#2a78b8"/></svg>
<div class="t" style="left:508.5px;top:384.50px;font-size:10px;color:#4a4a4a;font-weight:normal;letter-spacing:-0.3px;">EG-R3</div>
<div class="t" style="right:539px;top:384.50px;font-size:10px;color:#4a4a4a;font-weight:normal;letter-spacing:0px;">0</div>
<div class="t" style="right:496px;top:384.50px;font-size:10px;color:#4a4a4a;font-weight:normal;letter-spacing:-0.2px;">10,0</div>
<svg style="left:664.5px;top:381.86px" width="14" height="14" viewBox="0 0 14 14"><rect width="14" height="14" fill="#a8d030"/><path d="M2.4,12.4 L7,2.1 L11.6,12.4 M4,9.1 H10" stroke="#fff" stroke-width="1.45" fill="none"/></svg>
<div class="t" style="right:438.5px;top:384.50px;font-size:10px;color:#4a4a4a;font-weight:normal;letter-spacing:-0.2px;">20,0</div>
<svg style="left:722.5px;top:381.86px" width="14" height="14" viewBox="0 0 14 14"><rect width="14" height="14" fill="#a8d030"/><path d="M2.4,12.4 L7,2.1 L11.6,12.4 M4,9.1 H10" stroke="#fff" stroke-width="1.45" fill="none"/></svg>
<div class="t" style="right:381px;top:384.50px;font-size:10px;color:#333;font-weight:bold;letter-spacing:-0.1px;">0,50</div>
<svg style="left:780px;top:381.86px" width="14" height="14" viewBox="0 0 14 14"><rect width="14" height="14" fill="#a8d030"/><path d="M2.4,12.4 L7,2.1 L11.6,12.4 M4,9.1 H10" stroke="#fff" stroke-width="1.45" fill="none"/></svg>
<svg style="left:798.5px;top:382.36px" width="12" height="12" viewBox="0 0 12 12"><rect x="0" y="0" width="12" height="12" rx="2" fill="#1565c0"/><path d="M2.8,6 L5,8.3 L9.2,3.6" stroke="#fff" stroke-width="1.2" fill="none"/></svg>
<svg style="left:811.5px;top:381.86px" width="14" height="14" viewBox="0 0 14 14"><rect width="14" height="14" fill="#a8d030"/><path d="M2.4,12.4 L7,2.1 L11.6,12.4 M4,9.1 H10" stroke="#fff" stroke-width="1.45" fill="none"/></svg>
<div class="t" style="right:249.5px;top:384.50px;font-size:10px;color:#4a4a4a;font-weight:normal;letter-spacing:-0.1px;">191</div>
<div class="b" style="left:241px;top:397.77px;width:684px;height:18.61px;background:#ffffff;border-top:1px solid #efefef"></div>
<div class="t" style="right:886px;top:403.11px;font-size:10px;color:#4a4a4a;font-weight:normal;letter-spacing:-0.2px;">22</div>
<div class="t" style="left:276.5px;top:403.11px;font-size:10px;color:#4a4a4a;font-weight:normal;letter-spacing:-0.3px;">EG-R8 Wohnen</div>
<svg style="left:470.5px;top:400.47px" width="14" height="14" viewBox="0 0 14 14"><rect width="14" height="14" fill="#a8d030"/><path d="M2.4,12.4 L7,2.1 L11.6,12.4 M4,9.1 H10" stroke="#fff" stroke-width="1.45" fill="none"/></svg>
<svg style="left:491px;top:400.37px" width="14" height="14" viewBox="0 0 14 14"><rect width="14" height="14" fill="#fff"/><path d="M1.3,9.8 C1.3,3.5 7.5,1.8 10,7.2" stroke="#2a78b8" stroke-width="2.5" fill="none"/><path d="M13.2,4.4 L13.4,10.9 L7,10.9Z" fill="#2a78b8"/></svg>
<div class="t" style="left:508.5px;top:403.11px;font-size:10px;color:#4a4a4a;font-weight:normal;letter-spacing:-0.3px;">EG-R8</div>
<div class="t" style="right:539px;top:403.11px;font-size:10px;color:#4a4a4a;font-weight:normal;letter-spacing:0px;">0</div>
<div class="t" style="right:496px;top:403.11px;font-size:10px;color:#4a4a4a;font-weight:normal;letter-spacing:-0.2px;">14,8</div>
<svg style="left:664.5px;top:400.47px" width="14" height="14" viewBox="0 0 14 14"><rect width="14" height="14" fill="#a8d030"/><path d="M2.4,12.4 L7,2.1 L11.6,12.4 M4,9.1 H10" stroke="#fff" stroke-width="1.45" fill="none"/></svg>
<div class="t" style="right:438.5px;top:403.11px;font-size:10px;color:#4a4a4a;font-weight:normal;letter-spacing:-0.2px;">20,0</div>
<svg style="left:722.5px;top:400.47px" width="14" height="14" viewBox="0 0 14 14"><rect width="14" height="14" fill="#a8d030"/><path d="M2.4,12.4 L7,2.1 L11.6,12.4 M4,9.1 H10" stroke="#fff" stroke-width="1.45" fill="none"/></svg>
<div class="t" style="right:381px;top:403.11px;font-size:10px;color:#333;font-weight:bold;letter-spacing:-0.1px;">0,50</div>
<svg style="left:780px;top:400.47px" width="14" height="14" viewBox="0 0 14 14"><rect width="14" height="14" fill="#a8d030"/><path d="M2.4,12.4 L7,2.1 L11.6,12.4 M4,9.1 H10" stroke="#fff" stroke-width="1.45" fill="none"/></svg>
<div class="b" style="left:798.5px;top:400.97px;width:12px;height:12px;border:1px solid #777;border-radius:2px;background:#fff"></div>
<svg style="left:811.5px;top:400.47px" width="14" height="14" viewBox="0 0 14 14"><rect width="14" height="14" fill="#a8d030"/><path d="M2.4,12.4 L7,2.1 L11.6,12.4 M4,9.1 H10" stroke="#fff" stroke-width="1.45" fill="none"/></svg>
<div class="t" style="right:249.5px;top:403.11px;font-size:10px;color:#4a4a4a;font-weight:normal;letter-spacing:-0.1px;">205</div>
<div class="b" style="left:241px;top:416.4px;width:684px;height:1px;background:#efefef"></div>
<div class="b" style="left:925px;top:241.5px;width:22px;height:373px;background:#f0f0f0"></div>
<div class="b" style="left:926px;top:241.5px;width:1px;height:372px;background:#e4e4e4"></div>
<div class="b" style="left:931px;top:241.5px;width:1px;height:372px;background:#e4e4e4"></div>
<div class="b" style="left:939.3px;top:103px;width:2px;height:407px;background:#7f7f7f"></div>
<div class="b" style="left:932px;top:87.5px;width:1px;height:154px;background:#fafafa"></div>
<div class="b" style="left:933.5px;top:87.5px;width:1px;height:0px;"></div>
<div class="b" style="left:233px;top:614px;width:714px;height:28px;background:#efefef"></div>
<div class="b" style="left:233.8px;top:619.6px;width:22px;height:22px;background:#a8d030"></div>
<svg style="left:238.5px;top:624.5px" width="12" height="12" viewBox="0 0 12 12"><path d="M1,1 L11,11 M11,1 L1,11" stroke="#c0282d" stroke-width="1.9"/></svg>
<div class="t" style="left:258.6px;top:622.91px;font-size:10.5px;color:#111;font-weight:bold;letter-spacing:0px;">Protokoll- Anzeige</div>
<div class="t" style="right:216px;top:623.53px;font-size:10px;color:#222;font-weight:normal;letter-spacing:-0.215px;">Durch Klicken der mit einem &#9888; markierten Zeile wird die zugehörige Eingabemaske geöffnet.</div>
<div class="b" style="left:233px;top:642px;width:714px;height:158px;background:#fff"></div>
<div class="b" style="left:931px;top:642px;width:16px;height:158px;background:#f0f0f0"></div>
<div class="b" style="left:937.5px;top:658px;width:1.5px;height:78px;background:#707070"></div>
<div class="t" style="left:234.5px;top:646.73px;font-size:10px;color:#111;font-weight:normal;letter-spacing:-0.12px;">Bilanz: 14:14:37 warn</div>
<div class="t" style="left:364.5px;top:646.73px;font-size:10px;color:#111;font-weight:normal;letter-spacing:0px;">-</div>
<div class="t" style="left:374.6px;top:646.73px;font-size:10px;color:#111;font-weight:normal;letter-spacing:-0.27px;">Korrektor: Heizbereich "zentrale Wärmeversorgung (1)": Wird Zone "Wohnen (1)" zugeordnet.</div>
<div class="t" style="left:234.5px;top:658.23px;font-size:10px;color:#111;font-weight:normal;letter-spacing:-0.12px;">Bilanz: 15:10:34 warn</div>
<div class="t" style="left:364.5px;top:658.23px;font-size:10px;color:#111;font-weight:normal;letter-spacing:0px;">-</div>
<div class="t" style="left:374.6px;top:658.23px;font-size:10px;color:#111;font-weight:normal;letter-spacing:-0.27px;">Korrektor: Heizbereich "zentrale Wärmeversorgung (1)": Wird Zone "Wohnen (1)" zugeordnet.</div>
<div class="t" style="left:234.5px;top:669.73px;font-size:10px;color:#111;font-weight:normal;letter-spacing:-0.12px;">EVEBI: 15:24:57 warn</div>
<div class="t" style="left:364.5px;top:669.73px;font-size:10px;color:#111;font-weight:normal;letter-spacing:0px;">-</div>
<div class="t" style="left:374.6px;top:669.73px;font-size:10px;color:#111;font-weight:normal;letter-spacing:-0.27px;">Heizlast Heizlast Wohnung (1): Raum EG-R6 Küche (2) hat keine Teilflächen. Transmissionsberechnung nicht möglich.</div>
<div class="t" style="left:234.5px;top:681.23px;font-size:10px;color:#111;font-weight:normal;letter-spacing:-0.12px;">EVEBI: 15:24:57 warn</div>
<div class="t" style="left:364.5px;top:681.23px;font-size:10px;color:#111;font-weight:normal;letter-spacing:0px;">-</div>
<div class="t" style="left:374.6px;top:681.23px;font-size:10px;color:#111;font-weight:normal;letter-spacing:-0.27px;">Heizlast Heizlast Wohnung (1): Raum EG-R1 Wohnzimmer (9) hat keine Teilflächen. Transmissionsberechnung nicht möglich.</div>
<div class="t" style="left:234.5px;top:692.73px;font-size:10px;color:#111;font-weight:normal;letter-spacing:-0.12px;">EVEBI: 15:24:57 warn</div>
<div class="t" style="left:364.5px;top:692.73px;font-size:10px;color:#111;font-weight:normal;letter-spacing:0px;">-</div>
<div class="t" style="left:374.6px;top:692.73px;font-size:10px;color:#111;font-weight:normal;letter-spacing:-0.27px;">Heizlast Heizlast Wohnung (1): Raum EG-R7 Flur (11) hat keine Teilflächen. Transmissionsberechnung nicht möglich.</div>
<div class="t" style="left:234.5px;top:704.23px;font-size:10px;color:#111;font-weight:normal;letter-spacing:-0.12px;">EVEBI: 15:24:57 warn</div>
<div class="t" style="left:364.5px;top:704.23px;font-size:10px;color:#111;font-weight:normal;letter-spacing:0px;">-</div>
<div class="t" style="left:374.6px;top:704.23px;font-size:10px;color:#111;font-weight:normal;letter-spacing:-0.27px;">Heizlast Heizlast Wohnung (1): Raum EG-R5 WC (12) hat keine Teilflächen. Transmissionsberechnung nicht möglich.</div>
<div class="t" style="left:234.5px;top:715.73px;font-size:10px;color:#111;font-weight:normal;letter-spacing:-0.12px;">EVEBI: 15:24:57 warn</div>
<div class="t" style="left:364.5px;top:715.73px;font-size:10px;color:#111;font-weight:normal;letter-spacing:0px;">-</div>
<div class="t" style="left:374.6px;top:715.73px;font-size:10px;color:#111;font-weight:normal;letter-spacing:-0.27px;">Heizlast Heizlast Wohnung (1): Raum EG-R2 Schlafzimmer (13) hat keine Teilflächen. Transmissionsberechnung nicht möglich.</div>
<div class="t" style="left:234.5px;top:727.23px;font-size:10px;color:#111;font-weight:normal;letter-spacing:-0.12px;">EVEBI: 15:24:57 warn</div>
<div class="t" style="left:364.5px;top:727.23px;font-size:10px;color:#111;font-weight:normal;letter-spacing:0px;">-</div>
<div class="t" style="left:374.6px;top:727.23px;font-size:10px;color:#111;font-weight:normal;letter-spacing:-0.27px;">Heizlast Heizlast Wohnung (1): Raum EG-R4 Bad (16) hat keine Teilflächen. Transmissionsberechnung nicht möglich.</div>
<div class="t" style="left:234.5px;top:738.73px;font-size:10px;color:#111;font-weight:normal;letter-spacing:-0.12px;">EVEBI: 15:24:57 warn</div>
<div class="t" style="left:364.5px;top:738.73px;font-size:10px;color:#111;font-weight:normal;letter-spacing:0px;">-</div>
<div class="t" style="left:374.6px;top:738.73px;font-size:10px;color:#111;font-weight:normal;letter-spacing:-0.27px;">Heizlast Heizlast Wohnung (1): Raum EG-R3 Kinderzimmer (19) hat keine Teilflächen. Transmissionsberechnung nicht möglich.</div>
<div class="t" style="left:234.5px;top:750.23px;font-size:10px;color:#111;font-weight:normal;letter-spacing:-0.12px;">EVEBI: 15:24:57 warn</div>
<div class="t" style="left:364.5px;top:750.23px;font-size:10px;color:#111;font-weight:normal;letter-spacing:0px;">-</div>
<div class="t" style="left:374.6px;top:750.23px;font-size:10px;color:#111;font-weight:normal;letter-spacing:-0.27px;">Heizlast Heizlast Wohnung (1): Raum EG-R8 Wohnen (22) hat keine Teilflächen. Transmissionsberechnung nicht möglich.</div>
<div class="t" style="left:234.5px;top:761.73px;font-size:10px;color:#111;font-weight:normal;letter-spacing:-0.12px;">EVEBI: 15:24:57 warn</div>
<div class="t" style="left:364.5px;top:761.73px;font-size:10px;color:#111;font-weight:normal;letter-spacing:0px;">-</div>
<div class="t" style="left:374.6px;top:761.73px;font-size:10px;color:#111;font-weight:normal;letter-spacing:-0.27px;">Heizlast Heizlast Wohnung (1): Raum EG-R6 Küche (2) hat keine Teilflächen. Transmissionsberechnung nicht möglich.</div>
<div class="t" style="left:234.5px;top:773.23px;font-size:10px;color:#111;font-weight:normal;letter-spacing:-0.12px;">EVEBI: 15:24:57 warn</div>
<div class="t" style="left:364.5px;top:773.23px;font-size:10px;color:#111;font-weight:normal;letter-spacing:0px;">-</div>
<div class="t" style="left:374.6px;top:773.23px;font-size:10px;color:#111;font-weight:normal;letter-spacing:-0.27px;">Heizlast Heizlast Wohnung (1): Raum EG-R1 Wohnzimmer (9) hat keine Teilflächen. Transmissionsberechnung nicht möglich.</div>
<div class="t" style="left:234.5px;top:784.73px;font-size:10px;color:#111;font-weight:normal;letter-spacing:-0.12px;">EVEBI: 15:24:57 warn</div>
<div class="t" style="left:364.5px;top:784.73px;font-size:10px;color:#111;font-weight:normal;letter-spacing:0px;">-</div>
<div class="t" style="left:374.6px;top:784.73px;font-size:10px;color:#111;font-weight:normal;letter-spacing:-0.27px;">Heizlast Heizlast Wohnung (1): Raum EG-R7 Flur (11) hat keine Teilflächen. Transmissionsberechnung nicht möglich.</div>
<div class="t" style="left:234.5px;top:798.03px;font-size:10px;color:#111;font-weight:normal;letter-spacing:-0.12px;">EVEBI: 15:24:57 warn</div>
<div class="t" style="left:364.5px;top:798.03px;font-size:10px;color:#111;font-weight:normal;letter-spacing:0px;">-</div>
<div class="t" style="left:374.6px;top:798.03px;font-size:10px;color:#111;font-weight:normal;letter-spacing:-0.27px;">Heizlast Heizlast Wohnung (1): Raum EG-R5 WC (12) hat keine Teilflächen. Transmissionsberechnung nicht möglich.</div>
<div class="b" style="left:233px;top:798px;width:714px;height:2px;background:#8a8a8a"></div>
<div class="b" style="left:947px;top:67px;width:212px;height:733px;background:#f0f0f0"></div>
<div class="b" style="left:950.5px;top:67px;width:185.5px;height:17.5px;background:#fff;border-bottom:1px solid #b8b8b8"></div>
<div class="t" style="left:953px;top:71.83px;font-size:10px;color:#222;font-weight:normal;letter-spacing:-0.25px;">Ist-Zustand</div>
<svg style="left:1123px;top:73.5px" width="9" height="5" viewBox="0 0 9 5"><path d="M0.5,0.5 L4.5,4.5 L8.5,0.5" stroke="#555" stroke-width="1" fill="none"/></svg>
<div class="b" style="left:1137px;top:67px;width:18.5px;height:17.5px;border:1.5px solid #3a7ec8;border-radius:3px;background:#a8d030"></div>
<svg style="left:1139px;top:69px" width="14.5" height="13.5" viewBox="0 0 14 14" preserveAspectRatio="none"><path d="M2.2,12.6 L7,1.8 L11.8,12.6 M3.8,9.1 H10.2" stroke="#fff" stroke-width="1.3" fill="none"/></svg>
<div class="b" style="left:950px;top:85.8px;width:208px;height:691.3px;background:#fff;border:2px solid #747474"></div>
<div class="b" style="left:950px;top:399.9px;width:208px;height:4.100000000000023px;background:#747474"></div>
<div class="b" style="left:950px;top:499.7px;width:208px;height:3.6999999999999886px;background:#747474"></div>
<div class="b" style="left:950px;top:578.8px;width:208px;height:3.300000000000068px;background:#747474"></div>
<div class="b" style="left:950px;top:673.3px;width:208px;height:4.100000000000023px;background:#747474"></div>
<div class="b" style="left:947px;top:777px;width:212px;height:23px;background:#efefef"></div>
<div class="b" style="left:947px;top:798px;width:212px;height:2px;background:#a0a0a0"></div>
<div class="t" style="left:965.3px;top:95.02px;font-size:16.4px;color:#1a1a1a;font-weight:normal;letter-spacing:0px;">GEG 2024</div>
<div class="t" style="left:965.3px;top:114.59px;font-size:12.3px;color:#333;font-weight:normal;letter-spacing:0px;">DIN V 18599</div>
<div class="b" style="left:1126.0px;top:97.5px;width:16.6px;height:16.6px;border-radius:50%;background:#b5272a"></div>
<div class="b" style="left:967.3px;top:132.2px;width:174.3px;height:125.0px;background:#fff;box-shadow:1px 1.5px 1.5px rgba(0,0,0,0.28)"></div>
<div class="b" style="left:967.3px;top:132.2px;width:13.8px;height:125.0px;background:#d5d5d5"></div>
<div class="t" style="left:934.2px;top:189.7px;width:80px;height:10px;line-height:10px;text-align:center;font-size:8.3px;color:#222;transform:rotate(-90deg)"><span style='color:#111'>Effizienzklasse</span></div>
<div class="b" style="left:988.2px;top:132.2px;width:153.4px;height:125px;background:#b5292a"></div>
<svg style="left:1032.9px;top:148.6px" width="64" height="82.4" viewBox="0 0 64 82.4"><rect x="0" y="0" width="11.3" height="82.4" fill="#fff"/><rect x="52.7" y="0" width="11.3" height="82.4" fill="#fff"/><rect x="0" y="35.3" width="64" height="10" fill="#fff"/></svg>
<div class="t" style="left:1034.3px;top:237.5px;font-size:12.8px;color:#fff"><b>362,1</b> kWh/(m²a)</div>
<div class="b" style="left:967.3px;top:262.9px;width:174.3px;height:47.0px;background:#fff;box-shadow:1px 1.5px 1.5px rgba(0,0,0,0.28)"></div>
<div class="b" style="left:967.3px;top:262.9px;width:13.8px;height:47.0px;background:#d5d5d5"></div>
<div class="t" style="left:934.2px;top:281.4px;width:80px;height:10px;line-height:10px;text-align:center;font-size:6.5px;color:#222;transform:rotate(-90deg)">QP</div>
<div class="b" style="left:988.2px;top:262.9px;width:91.79999999999995px;height:15.3px;background:#d3d3d3"></div>
<div class="t" style="left:992px;top:266.15px;font-size:8px;color:#111;letter-spacing:-0.1px">75 kWh/(m²a)</div>
<div class="b" style="left:988.2px;top:278.2px;width:128.20000000000005px;height:15.8px;background:#3f80b8"></div>
<div class="t" style="left:992px;top:281.70px;font-size:8px;color:#111;letter-spacing:-0.1px">105 kWh/(m²a)</div>
<div class="b" style="left:988.2px;top:294px;width:153.39999999999986px;height:15.9px;background:linear-gradient(90deg,#3e8a1a 0%,#9ccc3c 22%,#d8de45 38%,#fcd83e 50%,#eca63c 68%,#d9712f 82%,#b5282a 100%)"></div>
<div class="t" style="left:992px;top:297.55px;font-size:8px;color:#111;letter-spacing:-0.1px">398 kWh/(m²a)</div>
<div class="b" style="left:967.3px;top:316px;width:174.3px;height:46.39999999999998px;background:#fff;box-shadow:1px 1.5px 1.5px rgba(0,0,0,0.28)"></div>
<div class="b" style="left:967.3px;top:316px;width:13.8px;height:46.39999999999998px;background:#d5d5d5"></div>
<div class="t" style="left:934.2px;top:334.2px;width:80px;height:10px;line-height:10px;text-align:center;font-size:6.5px;color:#222;transform:rotate(-90deg)">HT</div>
<div class="b" style="left:988.2px;top:316px;width:77.39999999999986px;height:15.3px;background:#d3d3d3"></div>
<div class="t" style="left:992px;top:319.25px;font-size:8px;color:#111;letter-spacing:-0.1px">0,39 W/(m²K)</div>
<div class="b" style="left:988.2px;top:331.3px;width:137.79999999999995px;height:15.3px;background:#3f80b8"></div>
<div class="t" style="left:992px;top:334.55px;font-size:8px;color:#111;letter-spacing:-0.1px">0,70 W/(m²K)</div>
<div class="b" style="left:988.2px;top:346.6px;width:153.39999999999986px;height:15.8px;background:linear-gradient(90deg,#3e8a1a 0%,#9ccc3c 22%,#d8de45 38%,#fcd83e 50%,#eca63c 68%,#d9712f 82%,#b5282a 100%)"></div>
<div class="t" style="left:992px;top:350.10px;font-size:8px;color:#111;letter-spacing:-0.1px">1,21 W/(m²K)</div>
<div class="b" style="left:967.3px;top:368.4px;width:174.3px;height:17.200000000000045px;background:#fff;box-shadow:1px 1.5px 1.5px rgba(0,0,0,0.28)"></div>
<div class="b" style="left:967.3px;top:368.4px;width:13.8px;height:17.200000000000045px;background:#d5d5d5"></div>
<div class="t" style="left:934.2px;top:372.0px;width:80px;height:10px;line-height:10px;text-align:center;font-size:6.5px;color:#222;transform:rotate(-90deg)">EH</div>
<div class="b" style="left:988.2px;top:369.2px;width:36.200000000000045px;height:16px;background:#c0282d"></div>
<div class="t" style="right:135.5999999999999px;top:373.73px;font-size:8px;color:#fff;font-weight:bold;letter-spacing:-0.2px;">40</div>
<div class="b" style="left:1026px;top:369.2px;width:13px;height:16px;background:#c0282d"></div>
<div class="t" style="right:121px;top:373.73px;font-size:8px;color:#fff;font-weight:bold;letter-spacing:-0.2px;">55</div>
<div class="b" style="left:1041px;top:369.2px;width:12px;height:16px;background:#c0282d"></div>
<div class="t" style="right:107px;top:373.73px;font-size:8px;color:#fff;font-weight:bold;letter-spacing:-0.2px;">70</div>
<div class="b" style="left:1055px;top:369.2px;width:12.400000000000091px;height:16px;background:#c0282d"></div>
<div class="t" style="right:92.59999999999991px;top:373.73px;font-size:8px;color:#fff;font-weight:bold;letter-spacing:-0.2px;">85</div>
<div class="b" style="left:1069px;top:369.2px;width:70.59999999999991px;height:16px;background:#c0282d"></div>
<div class="t" style="right:20.40000000000009px;top:373.73px;font-size:8px;color:#fff;font-weight:bold;letter-spacing:-0.2px;">160</div>
<div class="t" style="left:965.5px;top:412.92px;font-size:16.4px;color:#1a1a1a;font-weight:normal;letter-spacing:0px;">Erneuerbare</div>
<div class="t" style="left:965.5px;top:431.92px;font-size:16.4px;color:#1a1a1a;font-weight:normal;letter-spacing:0px;">Energien</div>
<div class="b" style="left:1126.0px;top:413.9px;width:16.6px;height:16.6px;border-radius:50%;background:#b5272a"></div>
<div class="b" style="left:967.3px;top:454.5px;width:174.3px;height:30.80000000000001px;background:#fff;box-shadow:1px 1.5px 1.5px rgba(0,0,0,0.28)"></div>
<div class="b" style="left:967.3px;top:454.5px;width:13.8px;height:30.80000000000001px;background:#d5d5d5"></div>
<div class="t" style="left:934.2px;top:464.9px;width:80px;height:10px;line-height:10px;text-align:center;font-size:7.5px;color:#222;transform:rotate(-90deg)">EE</div>
<div class="b" style="left:988.2px;top:455px;width:99.0px;height:14.8px;background:#d3d3d3"></div>
<div class="t" style="left:992px;top:458.27px;font-size:7.5px;color:#111;letter-spacing:-0.1px"><b>65 %</b></div>
<div class="b" style="left:988.2px;top:470px;width:0.0px;height:15px;background:transparent"></div>
<div class="t" style="left:992px;top:473.38px;font-size:7.5px;color:#111;letter-spacing:-0.1px"><b>0 %</b></div>
<div class="t" style="left:965.5px;top:512.02px;font-size:16.4px;color:#1a1a1a;font-weight:normal;letter-spacing:0px;">Sommerlicher</div>
<div class="t" style="left:965.5px;top:532.12px;font-size:16.4px;color:#1a1a1a;font-weight:normal;letter-spacing:0px;">Wärmeschutz</div>
<div class="t" style="left:965.5px;top:550.79px;font-size:12.3px;color:#333;font-weight:normal;letter-spacing:0px;">DIN 4108-2</div>
<div class="b" style="left:1126.5px;top:514.5px;width:16px;height:16px;border-radius:50%;border:1.3px solid #222;background:#fff"></div>
<div class="t" style="left:965.5px;top:590.12px;font-size:16.4px;color:#1a1a1a;font-weight:normal;letter-spacing:0px;">Lüftungskonzept</div>
<div class="t" style="left:965.5px;top:608.89px;font-size:12.3px;color:#333;font-weight:normal;letter-spacing:0px;">DIN 1946-6</div>
<div class="b" style="left:1126.2px;top:592.5px;width:16.6px;height:16.6px;border-radius:50%;background:#77b02a"></div>
<div class="b" style="left:967.3px;top:627.8px;width:174.3px;height:30.800000000000068px;background:#fff;box-shadow:1px 1.5px 1.5px rgba(0,0,0,0.28)"></div>
<div class="b" style="left:967.3px;top:627.8px;width:13.8px;height:30.800000000000068px;background:#d5d5d5"></div>
<div class="t" style="left:934.2px;top:638.2px;width:80px;height:10px;line-height:10px;text-align:center;font-size:6.5px;color:#222;transform:rotate(-90deg)"><b>ist min</b></div>
<div class="b" style="left:988.2px;top:628px;width:76.09999999999991px;height:14.9px;background:#d3d3d3"></div>
<div class="t" style="left:992px;top:631.33px;font-size:7.5px;color:#111;letter-spacing:-0.1px">39 m³/h</div>
<div class="b" style="left:988.2px;top:643px;width:38.899999999999864px;height:15.6px;background:#4a8ac4"></div>
<div class="t" style="left:992px;top:646.67px;font-size:7.5px;color:#111;letter-spacing:-0.1px">20 m³/h</div>
<div class="t" style="left:965.5px;top:685.32px;font-size:16.4px;color:#1a1a1a;font-weight:normal;letter-spacing:0px;">Beratung</div>
<div class="t" style="left:965.5px;top:704.49px;font-size:12.3px;color:#333;font-weight:normal;letter-spacing:0px;">DIN V 18599</div>
<div class="b" style="left:967.3px;top:722.6px;width:174.3px;height:15.699999999999932px;background:#fff;box-shadow:1px 1.5px 1.5px rgba(0,0,0,0.28)"></div>
<div class="b" style="left:967.3px;top:722.6px;width:13.8px;height:15.699999999999932px;background:#d5d5d5"></div>
<div class="t" style="left:934.2px;top:725.45px;width:80px;height:10px;line-height:10px;text-align:center;font-size:6px;color:#222;transform:rotate(-90deg)">QT</div>
<div class="b" style="left:988.2px;top:722.6px;width:153.39999999999986px;height:15.7px;background:linear-gradient(90deg,#3e8a1a 0%,#9ccc3c 22%,#d8de45 38%,#fcd83e 50%,#eca63c 68%,#d9712f 82%,#b5282a 100%)"></div>
<div class="t" style="left:992px;top:726.33px;font-size:7.5px;color:#111;letter-spacing:-0.1px">236 kWh/(m²a)</div>
<div class="b" style="left:967.3px;top:744.8px;width:174.3px;height:15.700000000000045px;background:#fff;box-shadow:1px 1.5px 1.5px rgba(0,0,0,0.28)"></div>
<div class="b" style="left:967.3px;top:744.8px;width:13.8px;height:15.700000000000045px;background:#d5d5d5"></div>
<div class="t" style="left:934.2px;top:747.65px;width:80px;height:10px;line-height:10px;text-align:center;font-size:6px;color:#222;transform:rotate(-90deg)">CO2</div>
<div class="b" style="left:988.2px;top:744.8px;width:131.8px;height:15.7px;background:linear-gradient(90deg,#3e8a1a 0%,#9ccc3c 22%,#d8de45 38%,#fcd83e 50%,#eca63c 68%,#d9712f 82%,#b5282a 100%);background-size:153.4px 100%"></div>
<div class="t" style="left:992px;top:748.5px;font-size:7.5px;color:#222">69 kg/(m²a)</div>
</body></html>
